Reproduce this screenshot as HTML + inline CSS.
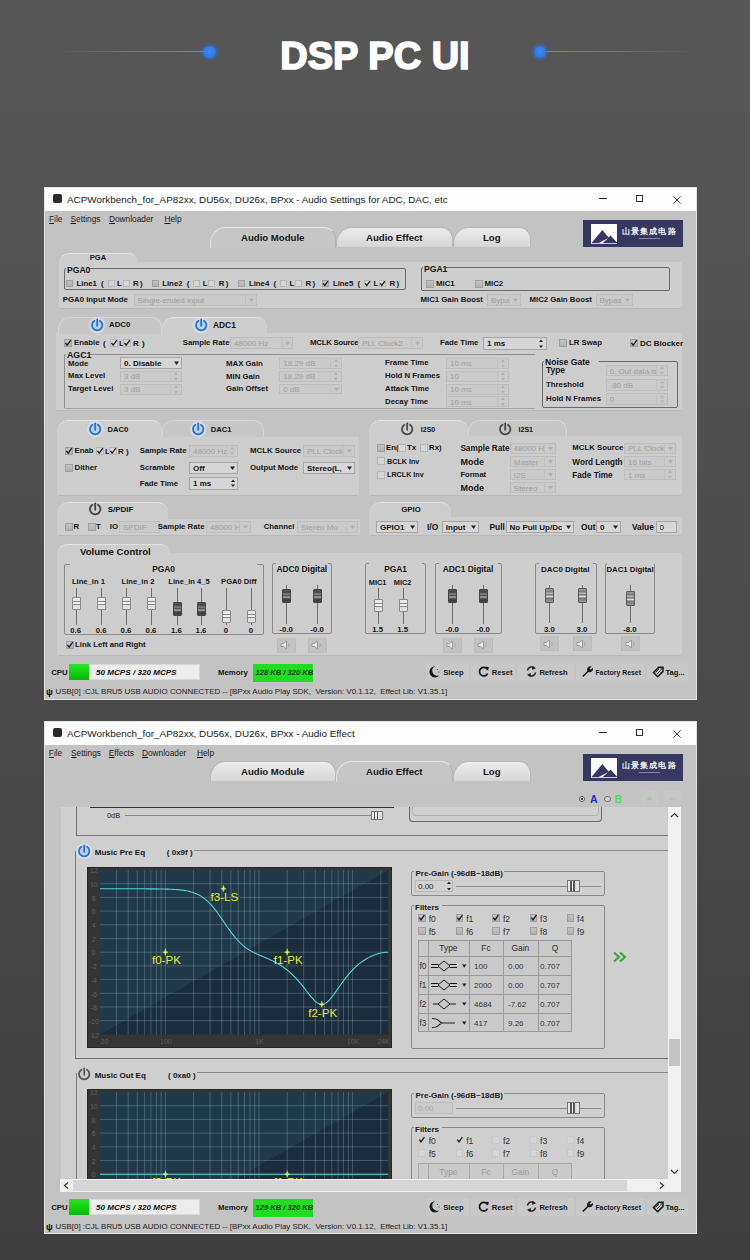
<!DOCTYPE html><html><head><meta charset="utf-8"><style>*{margin:0;padding:0;box-sizing:border-box}
html,body{width:750px;height:1260px;overflow:hidden;background:#4a4a4a}
#r{position:relative;width:750px;height:1260px;overflow:hidden;font-family:"Liberation Sans",sans-serif}
#r div{position:absolute}
.t{white-space:nowrap}
</style></head><body><div id="r"><div style="left:0;top:0;width:750px;height:1260px;background:linear-gradient(#575757 0px,#535353 300px,#4a4a4a 700px,#3f3f3f 1260px);"></div>
<div style="left:50px;top:51.2px;width:155px;height:1.2px;background:linear-gradient(90deg,rgba(130,140,165,0),rgba(130,145,175,0.55) 55%,rgba(120,150,210,0.75));"></div>
<div style="left:545px;top:51.2px;width:155px;height:1.2px;background:linear-gradient(90deg,rgba(120,150,210,0.75),rgba(130,145,175,0.5) 45%,rgba(130,140,165,0));"></div>
<div style="left:199.5px;top:41.8px;width:20.0px;height:20.0px;border-radius:50%;background:radial-gradient(circle,rgba(45,125,235,0.5) 0%,rgba(45,120,230,0.2) 55%,rgba(45,120,230,0) 72%);"></div>
<div style="left:203.2px;top:45.5px;width:12.6px;height:12.6px;border-radius:50%;background:radial-gradient(circle at 50% 45%,#3a8cf0,#2c7ae2 65%,#2f72c8);box-shadow:0 0 3px rgba(40,120,230,0.6);"></div>
<div style="left:530px;top:41.8px;width:20px;height:20.0px;border-radius:50%;background:radial-gradient(circle,rgba(45,125,235,0.5) 0%,rgba(45,120,230,0.2) 55%,rgba(45,120,230,0) 72%);"></div>
<div style="left:533.7px;top:45.5px;width:12.6px;height:12.6px;border-radius:50%;background:radial-gradient(circle at 50% 45%,#3a8cf0,#2c7ae2 65%,#2f72c8);box-shadow:0 0 3px rgba(40,120,230,0.6);"></div>
<div class="t" style="left:175px;width:400px;text-align:center;top:34px;height:44px;line-height:44px;font-size:38px;font-weight:bold;color:#fff;-webkit-text-stroke:1.6px #fff;letter-spacing:0px;">DSP PC UI</div>
<div style="left:44px;top:187px;width:653px;height:512.5px;background:#c3c3c3;border:1px solid #e2e2e2;"></div>
<div style="left:45px;top:188px;width:651px;height:23px;background:#fdfdfd;"></div>
<div style="left:52.7px;top:194px;width:9.3px;height:9px;background:#2b2b2b;border-radius:2px;"></div>
<div class="t" style="left:67px;top:193.07px;height:13.86px;line-height:13.86px;font-size:9.9px;font-weight:normal;color:#1a1a1a;white-space:nowrap;">ACPWorkbench_for_AP82xx, DU56x, DU26x, BPxx - Audio Settings for ADC, DAC, etc</div>
<div style="left:599.3px;top:198px;width:7.7px;height:1.2px;background:#222;"></div>
<div style="left:636px;top:195.2px;width:7px;height:7.3px;border:1px solid #333;"></div>
<svg style="position:absolute;left:672.5px;top:195.7px;" width="8" height="8" viewBox="0 0 8 8"><path d="M0.3 0.3 L7.7 7.7 M7.7 0.3 L0.3 7.7" stroke="#333" stroke-width="0.9"/></svg>
<div class="t" style="left:49px;top:214.49px;height:11.62px;line-height:11.62px;font-size:8.3px;font-weight:normal;color:#1a1a1a;white-space:nowrap;"><u>F</u>ile</div>
<div class="t" style="left:70.5px;top:214.49px;height:11.62px;line-height:11.62px;font-size:8.3px;font-weight:normal;color:#1a1a1a;white-space:nowrap;"><u>S</u>ettings</div>
<div class="t" style="left:109px;top:214.49px;height:11.62px;line-height:11.62px;font-size:8.3px;font-weight:normal;color:#1a1a1a;white-space:nowrap;"><u>D</u>ownloader</div>
<div class="t" style="left:164.5px;top:214.49px;height:11.62px;line-height:11.62px;font-size:8.3px;font-weight:normal;color:#1a1a1a;white-space:nowrap;"><u>H</u>elp</div>
<div style="left:209.5px;top:226.5px;width:126.5px;height:21.0px;background:#c6c6c6;border-radius:16px 12px 0 0;border:1px solid #b2b2b2;border-top-color:#e8e8e8;border-left-color:#e0e0e0;border-bottom:none;"></div>
<div class="t" style="left:-27.25px;width:600px;text-align:center;top:231.08px;height:13.44px;line-height:13.44px;font-size:9.6px;font-weight:bold;color:#151515;">Audio Module</div>
<div style="left:336px;top:226.5px;width:116.5px;height:20.0px;background:linear-gradient(#ececec,#d6d6d6);border-radius:16px 12px 0 0;border:1px solid #b8b8b8;border-bottom:none;"></div>
<div class="t" style="left:94.25px;width:600px;text-align:center;top:231.08px;height:13.44px;line-height:13.44px;font-size:9.6px;font-weight:bold;color:#151515;">Audio Effect</div>
<div style="left:452.5px;top:226.5px;width:78.5px;height:20.0px;background:linear-gradient(#ececec,#d6d6d6);border-radius:16px 12px 0 0;border:1px solid #b8b8b8;border-bottom:none;"></div>
<div class="t" style="left:191.75px;width:600px;text-align:center;top:231.08px;height:13.44px;line-height:13.44px;font-size:9.6px;font-weight:bold;color:#151515;">Log</div>
<div style="left:583.3px;top:220px;width:99.4px;height:27.2px;background:#363862;"></div>
<div style="left:590.6px;top:224.4px;width:26.1px;height:19.2px;background:#fbfbfb;"></div>
<svg style="position:absolute;left:590.6px;top:224.4px;" width="26.1" height="19.2" viewBox="0 0 26.1 19.2"><path d="M0.3 19.2 L11.4 5.9 L17.6 13.4 L19.6 11.6 L26.1 18.6 V19.2 Z" fill="#363862"/><path d="M7.5 19.2 Q12 16.5 17 14.2 Q13.5 17.5 11.5 19.2 Z" fill="#fbfbfb"/></svg>
<div class="t" style="left:349.3px;width:600px;text-align:center;top:226.94px;height:10.92px;line-height:10.92px;font-size:7.8px;font-weight:bold;color:#f4f4f8;letter-spacing:1.2px;">山景集成电路</div>
<div style="left:638.6px;top:238px;width:21.4px;height:1px;background:rgba(255,255,255,0.4);"></div>
<div style="left:44px;top:721px;width:653px;height:513px;background:#c3c3c3;border:1px solid #e2e2e2;"></div>
<div style="left:45px;top:722px;width:651px;height:23px;background:#fdfdfd;"></div>
<div style="left:52.7px;top:728px;width:9.3px;height:9px;background:#2b2b2b;border-radius:2px;"></div>
<div class="t" style="left:67px;top:727.07px;height:13.86px;line-height:13.86px;font-size:9.9px;font-weight:normal;color:#1a1a1a;white-space:nowrap;">ACPWorkbench_for_AP82xx, DU56x, DU26x, BPxx - Audio Effect</div>
<div style="left:599.3px;top:732px;width:7.7px;height:1.2px;background:#222;"></div>
<div style="left:636px;top:729.2px;width:7px;height:7.3px;border:1px solid #333;"></div>
<svg style="position:absolute;left:672.5px;top:729.7px;" width="8" height="8" viewBox="0 0 8 8"><path d="M0.3 0.3 L7.7 7.7 M7.7 0.3 L0.3 7.7" stroke="#333" stroke-width="0.9"/></svg>
<div class="t" style="left:48.8px;top:748.49px;height:11.62px;line-height:11.62px;font-size:8.3px;font-weight:normal;color:#1a1a1a;white-space:nowrap;"><u>F</u>ile</div>
<div class="t" style="left:71px;top:748.49px;height:11.62px;line-height:11.62px;font-size:8.3px;font-weight:normal;color:#1a1a1a;white-space:nowrap;"><u>S</u>ettings</div>
<div class="t" style="left:108.8px;top:748.49px;height:11.62px;line-height:11.62px;font-size:8.3px;font-weight:normal;color:#1a1a1a;white-space:nowrap;"><u>E</u>ffects</div>
<div class="t" style="left:142px;top:748.49px;height:11.62px;line-height:11.62px;font-size:8.3px;font-weight:normal;color:#1a1a1a;white-space:nowrap;"><u>D</u>ownloader</div>
<div class="t" style="left:197px;top:748.49px;height:11.62px;line-height:11.62px;font-size:8.3px;font-weight:normal;color:#1a1a1a;white-space:nowrap;"><u>H</u>elp</div>
<div style="left:209.5px;top:760.5px;width:126.5px;height:20.0px;background:linear-gradient(#ececec,#d6d6d6);border-radius:16px 12px 0 0;border:1px solid #b8b8b8;border-bottom:none;"></div>
<div class="t" style="left:-27.25px;width:600px;text-align:center;top:765.08px;height:13.44px;line-height:13.44px;font-size:9.6px;font-weight:bold;color:#151515;">Audio Module</div>
<div style="left:336px;top:760.5px;width:116.5px;height:21.0px;background:#c6c6c6;border-radius:16px 12px 0 0;border:1px solid #b2b2b2;border-top-color:#e8e8e8;border-left-color:#e0e0e0;border-bottom:none;"></div>
<div class="t" style="left:94.25px;width:600px;text-align:center;top:765.08px;height:13.44px;line-height:13.44px;font-size:9.6px;font-weight:bold;color:#151515;">Audio Effect</div>
<div style="left:452.5px;top:760.5px;width:78.5px;height:20.0px;background:linear-gradient(#ececec,#d6d6d6);border-radius:16px 12px 0 0;border:1px solid #b8b8b8;border-bottom:none;"></div>
<div class="t" style="left:191.75px;width:600px;text-align:center;top:765.08px;height:13.44px;line-height:13.44px;font-size:9.6px;font-weight:bold;color:#151515;">Log</div>
<div style="left:583.3px;top:754px;width:99.4px;height:27.2px;background:#363862;"></div>
<div style="left:590.6px;top:758.4px;width:26.1px;height:19.2px;background:#fbfbfb;"></div>
<svg style="position:absolute;left:590.6px;top:758.4px;" width="26.1" height="19.2" viewBox="0 0 26.1 19.2"><path d="M0.3 19.2 L11.4 5.9 L17.6 13.4 L19.6 11.6 L26.1 18.6 V19.2 Z" fill="#363862"/><path d="M7.5 19.2 Q12 16.5 17 14.2 Q13.5 17.5 11.5 19.2 Z" fill="#fbfbfb"/></svg>
<div class="t" style="left:349.3px;width:600px;text-align:center;top:760.94px;height:10.92px;line-height:10.92px;font-size:7.8px;font-weight:bold;color:#f4f4f8;letter-spacing:1.2px;">山景集成电路</div>
<div style="left:638.6px;top:772px;width:21.4px;height:1px;background:rgba(255,255,255,0.4);"></div>
<div style="left:59px;top:262px;width:622.5px;height:46.5px;background:#cdcdcd;border-radius:0 0 3px 3px;border-bottom:1px solid #b9b9b9;"></div>
<div style="left:59px;top:253px;width:78px;height:10px;background:#cdcdcd;border-radius:12px 10px 0 0;border-top:1px solid #e2e2e2;"></div>
<div class="t" style="left:-202px;width:600px;text-align:center;top:253.48px;height:10.64px;line-height:10.64px;font-size:7.6px;font-weight:bold;color:#151515;">PGA</div>
<div style="left:63.5px;top:268px;width:342.5px;height:22px;border:1px solid #6a6a6a;border-radius:2px;"></div>
<div style="left:66px;top:266px;width:23.33px;height:4px;background:#cdcdcd;"></div>
<div class="t" style="left:67px;top:263.78px;height:12.04px;line-height:12.04px;font-size:8.6px;font-weight:bold;color:#151515;">PGA0</div>
<div style="left:66px;top:280.0px;width:7px;height:7.0px;border:1px solid #a0a0a0;background:linear-gradient(#c2c2c2,#b2b2b2);"></div>
<div class="t" style="left:76.5px;top:278.84px;height:10.92px;line-height:10.92px;font-size:7.8px;font-weight:bold;color:#151515;">Line1</div>
<div class="t" style="left:101px;top:277.9px;height:11.2px;line-height:11.2px;font-size:8px;font-weight:bold;color:#151515;">(</div>
<div style="left:107.5px;top:280.0px;width:7.0px;height:7.0px;border:1px solid #a0a0a0;background:linear-gradient(#c2c2c2,#b2b2b2);background:#d6d6d6;border-color:#b6b6b6;"></div>
<div class="t" style="left:117px;top:278.84px;height:10.92px;line-height:10.92px;font-size:7.8px;font-weight:bold;color:#151515;">L</div>
<div style="left:122.5px;top:280.0px;width:7.0px;height:7.0px;border:1px solid #a0a0a0;background:linear-gradient(#c2c2c2,#b2b2b2);background:#d6d6d6;border-color:#b6b6b6;"></div>
<div class="t" style="left:133px;top:278.84px;height:10.92px;line-height:10.92px;font-size:7.8px;font-weight:bold;color:#151515;">R</div>
<div class="t" style="left:140px;top:277.9px;height:11.2px;line-height:11.2px;font-size:8px;font-weight:bold;color:#151515;">)</div>
<div style="left:151.7px;top:280.0px;width:7.0px;height:7.0px;border:1px solid #a0a0a0;background:linear-gradient(#c2c2c2,#b2b2b2);"></div>
<div class="t" style="left:162.2px;top:278.84px;height:10.92px;line-height:10.92px;font-size:7.8px;font-weight:bold;color:#151515;">Line2</div>
<div class="t" style="left:186.7px;top:277.9px;height:11.2px;line-height:11.2px;font-size:8px;font-weight:bold;color:#151515;">(</div>
<div style="left:193.2px;top:280.0px;width:7.0px;height:7.0px;border:1px solid #a0a0a0;background:linear-gradient(#c2c2c2,#b2b2b2);background:#d6d6d6;border-color:#b6b6b6;"></div>
<div class="t" style="left:202.7px;top:278.84px;height:10.92px;line-height:10.92px;font-size:7.8px;font-weight:bold;color:#151515;">L</div>
<div style="left:208.2px;top:280.0px;width:7.0px;height:7.0px;border:1px solid #a0a0a0;background:linear-gradient(#c2c2c2,#b2b2b2);background:#d6d6d6;border-color:#b6b6b6;"></div>
<div class="t" style="left:218.7px;top:278.84px;height:10.92px;line-height:10.92px;font-size:7.8px;font-weight:bold;color:#151515;">R</div>
<div class="t" style="left:225.7px;top:277.9px;height:11.2px;line-height:11.2px;font-size:8px;font-weight:bold;color:#151515;">)</div>
<div style="left:238.4px;top:280.0px;width:7.0px;height:7.0px;border:1px solid #a0a0a0;background:linear-gradient(#c2c2c2,#b2b2b2);"></div>
<div class="t" style="left:248.9px;top:278.84px;height:10.92px;line-height:10.92px;font-size:7.8px;font-weight:bold;color:#151515;">Line4</div>
<div class="t" style="left:273.4px;top:277.9px;height:11.2px;line-height:11.2px;font-size:8px;font-weight:bold;color:#151515;">(</div>
<div style="left:279.9px;top:280.0px;width:7.0px;height:7.0px;border:1px solid #a0a0a0;background:linear-gradient(#c2c2c2,#b2b2b2);background:#d6d6d6;border-color:#b6b6b6;"></div>
<div class="t" style="left:289.4px;top:278.84px;height:10.92px;line-height:10.92px;font-size:7.8px;font-weight:bold;color:#151515;">L</div>
<div style="left:294.9px;top:280.0px;width:7.0px;height:7.0px;border:1px solid #a0a0a0;background:linear-gradient(#c2c2c2,#b2b2b2);background:#d6d6d6;border-color:#b6b6b6;"></div>
<div class="t" style="left:305.4px;top:278.84px;height:10.92px;line-height:10.92px;font-size:7.8px;font-weight:bold;color:#151515;">R</div>
<div class="t" style="left:312.4px;top:277.9px;height:11.2px;line-height:11.2px;font-size:8px;font-weight:bold;color:#151515;">)</div>
<div style="left:322.4px;top:280.0px;width:7.0px;height:7.0px;border:1px solid #a0a0a0;background:linear-gradient(#c2c2c2,#b2b2b2);"></div>
<svg style="position:absolute;left:322.4px;top:280.0px;" width="7" height="7" viewBox="0 0 7 7"><path d="M1.26 3.36 L2.8 5.46 L5.95 1.05" fill="none" stroke="#1a1a1a" stroke-width="1.3"/></svg>
<div class="t" style="left:332.9px;top:278.84px;height:10.92px;line-height:10.92px;font-size:7.8px;font-weight:bold;color:#151515;">Line5</div>
<div class="t" style="left:357.4px;top:277.9px;height:11.2px;line-height:11.2px;font-size:8px;font-weight:bold;color:#151515;">(</div>
<div style="left:363.9px;top:280.0px;width:7.0px;height:7.0px;border:1px solid #a0a0a0;background:linear-gradient(#c2c2c2,#b2b2b2);background:#d6d6d6;border-color:#b6b6b6;"></div>
<svg style="position:absolute;left:363.9px;top:280.0px;" width="7" height="7" viewBox="0 0 7 7"><path d="M1.26 3.36 L2.8 5.46 L5.95 1.05" fill="none" stroke="#1a1a1a" stroke-width="1.3"/></svg>
<div class="t" style="left:373.4px;top:278.84px;height:10.92px;line-height:10.92px;font-size:7.8px;font-weight:bold;color:#151515;">L</div>
<div style="left:378.9px;top:280.0px;width:7.0px;height:7.0px;border:1px solid #a0a0a0;background:linear-gradient(#c2c2c2,#b2b2b2);background:#d6d6d6;border-color:#b6b6b6;"></div>
<svg style="position:absolute;left:378.9px;top:280.0px;" width="7" height="7" viewBox="0 0 7 7"><path d="M1.26 3.36 L2.8 5.46 L5.95 1.05" fill="none" stroke="#1a1a1a" stroke-width="1.3"/></svg>
<div class="t" style="left:389.4px;top:278.84px;height:10.92px;line-height:10.92px;font-size:7.8px;font-weight:bold;color:#151515;">R</div>
<div class="t" style="left:396.4px;top:277.9px;height:11.2px;line-height:11.2px;font-size:8px;font-weight:bold;color:#151515;">)</div>
<div class="t" style="left:62.8px;top:294.84px;height:10.92px;line-height:10.92px;font-size:7.8px;font-weight:bold;color:#151515;">PGA0 Input Mode</div>
<div style="left:133.6px;top:293.5px;width:123.4px;height:12.5px;border:1px solid #bdbdbd;background:#cacaca;"></div>
<div class="t" style="left:137.6px;top:294.95px;height:11.2px;line-height:11.2px;font-size:8px;font-weight:normal;color:#a0a0a0;white-space:nowrap;overflow:hidden;width:107.4px">Single-ended input</div>
<div style="left:245px;top:294.5px;width:1px;height:10.5px;background:#c0c0c0;"></div>
<svg style="position:absolute;left:246px;top:293.5px;" width="10" height="12.5" viewBox="0 0 10 12.5"><path d="M3 4.75 h5 l-2.5 3.5z" fill="#b0b0b0"/></svg>
<div style="left:421px;top:267px;width:249px;height:24px;border:1px solid #6a6a6a;border-radius:2px;"></div>
<div style="left:423px;top:265px;width:23.33px;height:4px;background:#cdcdcd;"></div>
<div class="t" style="left:424px;top:262.78px;height:12.04px;line-height:12.04px;font-size:8.6px;font-weight:bold;color:#151515;">PGA1</div>
<div style="left:426px;top:279.5px;width:8px;height:8.0px;border:1px solid #a0a0a0;background:linear-gradient(#c2c2c2,#b2b2b2);"></div>
<div class="t" style="left:436px;top:278.84px;height:10.92px;line-height:10.92px;font-size:7.8px;font-weight:bold;color:#151515;">MIC1</div>
<div style="left:474.5px;top:279.5px;width:8.0px;height:8.0px;border:1px solid #a0a0a0;background:linear-gradient(#c2c2c2,#b2b2b2);"></div>
<div class="t" style="left:484.5px;top:278.84px;height:10.92px;line-height:10.92px;font-size:7.8px;font-weight:bold;color:#151515;">MIC2</div>
<div class="t" style="left:420.5px;top:294.84px;height:10.92px;line-height:10.92px;font-size:7.8px;font-weight:bold;color:#151515;">MIC1 Gain Boost</div>
<div style="left:487px;top:293.5px;width:34px;height:12.5px;border:1px solid #bdbdbd;background:#cacaca;"></div>
<div class="t" style="left:491px;top:294.95px;height:11.2px;line-height:11.2px;font-size:8px;font-weight:normal;color:#a0a0a0;white-space:nowrap;overflow:hidden;width:18px">Bypass</div>
<div style="left:509px;top:294.5px;width:1px;height:10.5px;background:#c0c0c0;"></div>
<svg style="position:absolute;left:510px;top:293.5px;" width="10" height="12.5" viewBox="0 0 10 12.5"><path d="M3 4.75 h5 l-2.5 3.5z" fill="#b0b0b0"/></svg>
<div class="t" style="left:529.5px;top:294.84px;height:10.92px;line-height:10.92px;font-size:7.8px;font-weight:bold;color:#151515;">MIC2 Gain Boost</div>
<div style="left:595.5px;top:293.5px;width:37.5px;height:12.5px;border:1px solid #bdbdbd;background:#cacaca;"></div>
<div class="t" style="left:599.5px;top:294.95px;height:11.2px;line-height:11.2px;font-size:8px;font-weight:normal;color:#a0a0a0;white-space:nowrap;overflow:hidden;width:21.5px">Bypass</div>
<div style="left:621px;top:294.5px;width:1px;height:10.5px;background:#c0c0c0;"></div>
<svg style="position:absolute;left:622px;top:293.5px;" width="10" height="12.5" viewBox="0 0 10 12.5"><path d="M3 4.75 h5 l-2.5 3.5z" fill="#b0b0b0"/></svg>
<div style="left:56px;top:333px;width:625.5px;height:78px;background:#cdcdcd;border-radius:0 0 3px 3px;border-bottom:1px solid #b9b9b9;"></div>
<div style="left:58px;top:317px;width:104px;height:16.5px;background:#c6c6c6;border-radius:12px 10px 0 0;border:1px solid #d6d6d6;border-bottom:none;"></div>
<div style="left:162px;top:317px;width:105px;height:17.5px;background:#cdcdcd;border-radius:12px 10px 0 0;border-top:1px solid #e2e2e2;"></div>
<svg style="position:absolute;left:87.5px;top:315.8px;" width="18.4" height="18.4" viewBox="0 0 18.4 18.4"><circle cx="9.2" cy="9.2" r="8.2" fill="#d6e4f4" opacity="0.7"/><circle cx="9.2" cy="9.2" r="5.2" fill="#b9d2f2"/><path d="M11.96 4.79 A5.2 5.2 0 1 1 6.44 4.79" fill="none" stroke="#2f72c8" stroke-width="1.8" stroke-linecap="round"/><path d="M9.2 3.4 V9.8" stroke="#2f72c8" stroke-width="1.8" stroke-linecap="round"/></svg>
<div class="t" style="left:109px;top:320.34px;height:10.92px;line-height:10.92px;font-size:7.8px;font-weight:bold;color:#151515;">ADC0</div>
<svg style="position:absolute;left:191.5px;top:315.8px;" width="18.4" height="18.4" viewBox="0 0 18.4 18.4"><circle cx="9.2" cy="9.2" r="8.2" fill="#d6e4f4" opacity="0.7"/><circle cx="9.2" cy="9.2" r="5.2" fill="#b9d2f2"/><path d="M11.96 4.79 A5.2 5.2 0 1 1 6.44 4.79" fill="none" stroke="#2f72c8" stroke-width="1.8" stroke-linecap="round"/><path d="M9.2 3.4 V9.8" stroke="#2f72c8" stroke-width="1.8" stroke-linecap="round"/></svg>
<div class="t" style="left:213px;top:319.92px;height:11.76px;line-height:11.76px;font-size:8.4px;font-weight:bold;color:#151515;">ADC1</div>
<div style="left:64px;top:339.0px;width:8px;height:8.0px;border:1px solid #a0a0a0;background:linear-gradient(#c2c2c2,#b2b2b2);"></div>
<svg style="position:absolute;left:64px;top:339.0px;" width="8" height="8" viewBox="0 0 8 8"><path d="M1.44 3.84 L3.2 6.24 L6.8 1.2" fill="none" stroke="#1a1a1a" stroke-width="1.3"/></svg>
<div class="t" style="left:74px;top:338.34px;height:10.92px;line-height:10.92px;font-size:7.8px;font-weight:bold;color:#151515;">Enable</div>
<div class="t" style="left:103px;top:338.2px;height:11.2px;line-height:11.2px;font-size:8px;font-weight:bold;color:#151515;">(</div>
<div style="left:110px;top:339.0px;width:8px;height:8.0px;border:1px solid #a0a0a0;background:linear-gradient(#c2c2c2,#b2b2b2);background:#d6d6d6;border-color:#b6b6b6;"></div>
<svg style="position:absolute;left:110px;top:339.0px;" width="8" height="8" viewBox="0 0 8 8"><path d="M1.44 3.84 L3.2 6.24 L6.8 1.2" fill="none" stroke="#1a1a1a" stroke-width="1.3"/></svg>
<div class="t" style="left:119px;top:338.2px;height:11.2px;line-height:11.2px;font-size:8px;font-weight:bold;color:#151515;">L</div>
<div style="left:123px;top:339.0px;width:8px;height:8.0px;border:1px solid #a0a0a0;background:linear-gradient(#c2c2c2,#b2b2b2);background:#d6d6d6;border-color:#b6b6b6;"></div>
<svg style="position:absolute;left:123px;top:339.0px;" width="8" height="8" viewBox="0 0 8 8"><path d="M1.44 3.84 L3.2 6.24 L6.8 1.2" fill="none" stroke="#1a1a1a" stroke-width="1.3"/></svg>
<div class="t" style="left:133px;top:338.2px;height:11.2px;line-height:11.2px;font-size:8px;font-weight:bold;color:#151515;">R</div>
<div class="t" style="left:142px;top:338.2px;height:11.2px;line-height:11.2px;font-size:8px;font-weight:bold;color:#151515;">)</div>
<div class="t" style="left:182.7px;top:338.34px;height:10.92px;line-height:10.92px;font-size:7.8px;font-weight:bold;color:#151515;">Sample Rate</div>
<div style="left:230px;top:336.7px;width:63px;height:12.3px;border:1px solid #bdbdbd;background:#cacaca;"></div>
<div class="t" style="left:234px;top:338.05px;height:11.2px;line-height:11.2px;font-size:8px;font-weight:normal;color:#a0a0a0;white-space:nowrap;overflow:hidden;width:47px">48000 Hz</div>
<div style="left:281px;top:337.7px;width:1px;height:10.3px;background:#c0c0c0;"></div>
<svg style="position:absolute;left:282px;top:336.7px;" width="10" height="12.3" viewBox="0 0 10 12.3"><path d="M3 4.65 h5 l-2.5 3.5z" fill="#b0b0b0"/></svg>
<div class="t" style="left:310px;top:338.34px;height:10.92px;line-height:10.92px;font-size:7.8px;font-weight:bold;color:#151515;letter-spacing:-0.25px;">MCLK Source</div>
<div style="left:358px;top:336.7px;width:65px;height:12.3px;border:1px solid #bdbdbd;background:#cacaca;"></div>
<div class="t" style="left:362px;top:338.05px;height:11.2px;line-height:11.2px;font-size:8px;font-weight:normal;color:#a0a0a0;white-space:nowrap;overflow:hidden;width:49px">PLL Clock2</div>
<div style="left:411px;top:337.7px;width:1px;height:10.3px;background:#c0c0c0;"></div>
<svg style="position:absolute;left:412px;top:336.7px;" width="10" height="12.3" viewBox="0 0 10 12.3"><path d="M3 4.65 h5 l-2.5 3.5z" fill="#b0b0b0"/></svg>
<div class="t" style="left:440px;top:338.34px;height:10.92px;line-height:10.92px;font-size:7.8px;font-weight:bold;color:#151515;">Fade Time</div>
<div style="left:483px;top:336.5px;width:64px;height:13.3px;border:1px solid #a6a6a6;background:#d6d6d6;"></div>
<div class="t" style="left:487px;top:338.35px;height:11.2px;line-height:11.2px;font-size:8px;font-weight:bold;color:#151515;white-space:nowrap;overflow:hidden;width:48px">1 ms</div>
<svg style="position:absolute;left:535px;top:336.5px;" width="12" height="13.3" viewBox="0 0 12 13.3"><path d="M6 2.5 l-2 2.5 h4z M6 11 l-2 -2.5 h4z" fill="#222"/></svg>
<div style="left:559px;top:339.0px;width:8px;height:8.0px;border:1px solid #a0a0a0;background:linear-gradient(#c2c2c2,#b2b2b2);"></div>
<div class="t" style="left:569px;top:338.34px;height:10.92px;line-height:10.92px;font-size:7.8px;font-weight:bold;color:#151515;">LR Swap</div>
<div style="left:630px;top:339.0px;width:8px;height:8.0px;border:1px solid #a0a0a0;background:linear-gradient(#c2c2c2,#b2b2b2);"></div>
<svg style="position:absolute;left:630px;top:339.0px;" width="8" height="8" viewBox="0 0 8 8"><path d="M1.44 3.84 L3.2 6.24 L6.8 1.2" fill="none" stroke="#1a1a1a" stroke-width="1.3"/></svg>
<div class="t" style="left:640px;top:338.2px;height:11.2px;line-height:11.2px;font-size:8px;font-weight:bold;color:#151515;">DC Blocker</div>
<div style="left:64px;top:353.5px;width:472px;height:55.5px;border:1px solid #8e8e8e;border-right-color:transparent;border-bottom-color:#a6a6a6;border-radius:2px;"></div>
<div style="left:66px;top:351.5px;width:23.82px;height:4.0px;background:#cdcdcd;"></div>
<div class="t" style="left:67px;top:349.14px;height:12.32px;line-height:12.32px;font-size:8.8px;font-weight:bold;color:#151515;">AGC1</div>
<div class="t" style="left:68px;top:358.84px;height:10.92px;line-height:10.92px;font-size:7.8px;font-weight:bold;color:#151515;">Mode</div>
<div style="left:120px;top:357px;width:61.5px;height:12px;border:1px solid #a6a6a6;background:#d6d6d6;"></div>
<div class="t" style="left:124px;top:358.2px;height:11.2px;line-height:11.2px;font-size:8px;font-weight:bold;color:#151515;white-space:nowrap;overflow:hidden;width:45.5px">0. Disable</div>
<svg style="position:absolute;left:170.5px;top:357px;" width="10" height="12" viewBox="0 0 10 12"><path d="M3 4.5 h5 l-2.5 3.5z" fill="#222"/></svg>
<div class="t" style="left:68px;top:371.34px;height:10.92px;line-height:10.92px;font-size:7.8px;font-weight:bold;color:#151515;">Max Level</div>
<div style="left:120px;top:370.5px;width:61.5px;height:11.0px;border:1px solid #bdbdbd;background:#cacaca;"></div>
<div class="t" style="left:124px;top:371.2px;height:11.2px;line-height:11.2px;font-size:8px;font-weight:normal;color:#a0a0a0;white-space:nowrap;overflow:hidden;width:45.5px">3 dB</div>
<div style="left:169.5px;top:371.5px;width:1.0px;height:9.0px;background:#c0c0c0;"></div>
<svg style="position:absolute;left:170.5px;top:370.5px;" width="10" height="11.0" viewBox="0 0 10 11.0"><path d="M5 1.5 l-2 2.5 h4z M5 9.5 l-2 -2.5 h4z" fill="#b0b0b0"/></svg>
<div class="t" style="left:68px;top:384.34px;height:10.92px;line-height:10.92px;font-size:7.8px;font-weight:bold;color:#151515;">Target Level</div>
<div style="left:120px;top:383.5px;width:61.5px;height:11.0px;border:1px solid #bdbdbd;background:#cacaca;"></div>
<div class="t" style="left:124px;top:384.2px;height:11.2px;line-height:11.2px;font-size:8px;font-weight:normal;color:#a0a0a0;white-space:nowrap;overflow:hidden;width:45.5px">3 dB</div>
<div style="left:169.5px;top:384.5px;width:1.0px;height:9.0px;background:#c0c0c0;"></div>
<svg style="position:absolute;left:170.5px;top:383.5px;" width="10" height="11.0" viewBox="0 0 10 11.0"><path d="M5 1.5 l-2 2.5 h4z M5 9.5 l-2 -2.5 h4z" fill="#b0b0b0"/></svg>
<div class="t" style="left:226px;top:358.64px;height:10.92px;line-height:10.92px;font-size:7.8px;font-weight:bold;color:#151515;">MAX Gain</div>
<div style="left:279.3px;top:358px;width:62.4px;height:10.5px;border:1px solid #bdbdbd;background:#cacaca;"></div>
<div class="t" style="left:283.3px;top:358.45px;height:11.2px;line-height:11.2px;font-size:8px;font-weight:normal;color:#a0a0a0;white-space:nowrap;overflow:hidden;width:46.4px">18.29 dB</div>
<div style="left:329.7px;top:359px;width:1.0px;height:8.5px;background:#c0c0c0;"></div>
<svg style="position:absolute;left:330.7px;top:358px;" width="10" height="10.5" viewBox="0 0 10 10.5"><path d="M5 1.25 l-2 2.5 h4z M5 9.25 l-2 -2.5 h4z" fill="#b0b0b0"/></svg>
<div class="t" style="left:226px;top:372.04px;height:10.92px;line-height:10.92px;font-size:7.8px;font-weight:bold;color:#151515;">MIN Gain</div>
<div style="left:279.3px;top:371px;width:62.4px;height:10.5px;border:1px solid #bdbdbd;background:#cacaca;"></div>
<div class="t" style="left:283.3px;top:371.45px;height:11.2px;line-height:11.2px;font-size:8px;font-weight:normal;color:#a0a0a0;white-space:nowrap;overflow:hidden;width:46.4px">18.29 dB</div>
<div style="left:329.7px;top:372px;width:1.0px;height:8.5px;background:#c0c0c0;"></div>
<svg style="position:absolute;left:330.7px;top:371px;" width="10" height="10.5" viewBox="0 0 10 10.5"><path d="M5 1.25 l-2 2.5 h4z M5 9.25 l-2 -2.5 h4z" fill="#b0b0b0"/></svg>
<div class="t" style="left:226px;top:384.34px;height:10.92px;line-height:10.92px;font-size:7.8px;font-weight:bold;color:#151515;">Gain Offset</div>
<div style="left:279.3px;top:383.5px;width:62.4px;height:10.5px;border:1px solid #bdbdbd;background:#cacaca;"></div>
<div class="t" style="left:283.3px;top:383.95px;height:11.2px;line-height:11.2px;font-size:8px;font-weight:normal;color:#a0a0a0;white-space:nowrap;overflow:hidden;width:46.4px">0 dB</div>
<div style="left:329.7px;top:384.5px;width:1.0px;height:8.5px;background:#c0c0c0;"></div>
<svg style="position:absolute;left:330.7px;top:383.5px;" width="10" height="10.5" viewBox="0 0 10 10.5"><path d="M3 3.75 h5 l-2.5 3.5z" fill="#b0b0b0"/></svg>
<div class="t" style="left:385px;top:358.34px;height:10.92px;line-height:10.92px;font-size:7.8px;font-weight:bold;color:#151515;">Frame Time</div>
<div style="left:446px;top:357.5px;width:62.5px;height:11.0px;border:1px solid #bdbdbd;background:#cacaca;"></div>
<div class="t" style="left:450px;top:358.2px;height:11.2px;line-height:11.2px;font-size:8px;font-weight:normal;color:#a0a0a0;white-space:nowrap;overflow:hidden;width:46.5px">10 ms</div>
<div style="left:496.5px;top:358.5px;width:1.0px;height:9.0px;background:#c0c0c0;"></div>
<svg style="position:absolute;left:497.5px;top:357.5px;" width="10" height="11.0" viewBox="0 0 10 11.0"><path d="M5 1.5 l-2 2.5 h4z M5 9.5 l-2 -2.5 h4z" fill="#b0b0b0"/></svg>
<div class="t" style="left:385px;top:371.34px;height:10.92px;line-height:10.92px;font-size:7.8px;font-weight:bold;color:#151515;">Hold N Frames</div>
<div style="left:446px;top:370.5px;width:62.5px;height:11.0px;border:1px solid #bdbdbd;background:#cacaca;"></div>
<div class="t" style="left:450px;top:371.2px;height:11.2px;line-height:11.2px;font-size:8px;font-weight:normal;color:#a0a0a0;white-space:nowrap;overflow:hidden;width:46.5px">10</div>
<div style="left:496.5px;top:371.5px;width:1.0px;height:9.0px;background:#c0c0c0;"></div>
<svg style="position:absolute;left:497.5px;top:370.5px;" width="10" height="11.0" viewBox="0 0 10 11.0"><path d="M5 1.5 l-2 2.5 h4z M5 9.5 l-2 -2.5 h4z" fill="#b0b0b0"/></svg>
<div class="t" style="left:385px;top:384.34px;height:10.92px;line-height:10.92px;font-size:7.8px;font-weight:bold;color:#151515;">Attack Time</div>
<div style="left:446px;top:383.5px;width:62.5px;height:11.0px;border:1px solid #bdbdbd;background:#cacaca;"></div>
<div class="t" style="left:450px;top:384.2px;height:11.2px;line-height:11.2px;font-size:8px;font-weight:normal;color:#a0a0a0;white-space:nowrap;overflow:hidden;width:46.5px">10 ms</div>
<div style="left:496.5px;top:384.5px;width:1.0px;height:9.0px;background:#c0c0c0;"></div>
<svg style="position:absolute;left:497.5px;top:383.5px;" width="10" height="11.0" viewBox="0 0 10 11.0"><path d="M5 1.5 l-2 2.5 h4z M5 9.5 l-2 -2.5 h4z" fill="#b0b0b0"/></svg>
<div class="t" style="left:385px;top:397.04px;height:10.92px;line-height:10.92px;font-size:7.8px;font-weight:bold;color:#151515;">Decay Time</div>
<div style="left:446px;top:396.2px;width:62.5px;height:11.0px;border:1px solid #bdbdbd;background:#cacaca;"></div>
<div class="t" style="left:450px;top:396.9px;height:11.2px;line-height:11.2px;font-size:8px;font-weight:normal;color:#a0a0a0;white-space:nowrap;overflow:hidden;width:46.5px">10 ms</div>
<div style="left:496.5px;top:397.2px;width:1.0px;height:9.0px;background:#c0c0c0;"></div>
<svg style="position:absolute;left:497.5px;top:396.2px;" width="10" height="11.0" viewBox="0 0 10 11.0"><path d="M5 1.5 l-2 2.5 h4z M5 9.5 l-2 -2.5 h4z" fill="#b0b0b0"/></svg>
<div style="left:541.5px;top:360.6px;width:136.0px;height:47.9px;border:1px solid #6a6a6a;border-radius:2px;"></div>
<div style="left:544px;top:358.6px;width:55.32px;height:4.0px;background:#cdcdcd;"></div>
<div class="t" style="left:545px;top:356.38px;height:12.04px;line-height:12.04px;font-size:8.6px;font-weight:bold;color:#151515;">Noise Gate</div>
<div class="t" style="left:546px;top:365.42px;height:11.76px;line-height:11.76px;font-size:8.4px;font-weight:bold;color:#151515;">Type</div>
<div style="left:605.5px;top:365px;width:62.5px;height:11px;border:1px solid #bdbdbd;background:#cacaca;"></div>
<div class="t" style="left:609.5px;top:365.7px;height:11.2px;line-height:11.2px;font-size:8px;font-weight:normal;color:#a0a0a0;white-space:nowrap;overflow:hidden;width:46.5px">0. Out data is</div>
<div style="left:656px;top:366px;width:1px;height:9px;background:#c0c0c0;"></div>
<svg style="position:absolute;left:657px;top:365px;" width="10" height="11" viewBox="0 0 10 11"><path d="M5 1.5 l-2 2.5 h4z M5 9.5 l-2 -2.5 h4z" fill="#b0b0b0"/></svg>
<div class="t" style="left:546px;top:380.04px;height:10.92px;line-height:10.92px;font-size:7.8px;font-weight:bold;color:#151515;">Threshold</div>
<div style="left:605.5px;top:379px;width:62.5px;height:11.5px;border:1px solid #bdbdbd;background:#cacaca;"></div>
<div class="t" style="left:609.5px;top:379.95px;height:11.2px;line-height:11.2px;font-size:8px;font-weight:normal;color:#a0a0a0;white-space:nowrap;overflow:hidden;width:46.5px">-80 dB</div>
<div style="left:656px;top:380px;width:1px;height:9.5px;background:#c0c0c0;"></div>
<svg style="position:absolute;left:657px;top:379px;" width="10" height="11.5" viewBox="0 0 10 11.5"><path d="M5 1.75 l-2 2.5 h4z M5 9.75 l-2 -2.5 h4z" fill="#b0b0b0"/></svg>
<div class="t" style="left:546px;top:394.34px;height:10.92px;line-height:10.92px;font-size:7.8px;font-weight:bold;color:#151515;">Hold N Frames</div>
<div style="left:605.5px;top:393px;width:62.5px;height:12px;border:1px solid #bdbdbd;background:#cacaca;"></div>
<div class="t" style="left:609.5px;top:394.2px;height:11.2px;line-height:11.2px;font-size:8px;font-weight:normal;color:#a0a0a0;white-space:nowrap;overflow:hidden;width:46.5px">0</div>
<div style="left:656px;top:394px;width:1px;height:10px;background:#c0c0c0;"></div>
<svg style="position:absolute;left:657px;top:393px;" width="10" height="12" viewBox="0 0 10 12"><path d="M5 2.0 l-2 2.5 h4z M5 10.0 l-2 -2.5 h4z" fill="#b0b0b0"/></svg>
<div style="left:56.5px;top:437px;width:302.0px;height:58.5px;background:#cdcdcd;border-radius:0 0 3px 3px;border-bottom:1px solid #b9b9b9;"></div>
<div style="left:56.5px;top:420px;width:105.5px;height:18.5px;background:#cdcdcd;border-radius:12px 10px 0 0;border-top:1px solid #e2e2e2;"></div>
<div style="left:162px;top:420px;width:102px;height:17px;background:#c6c6c6;border-radius:12px 10px 0 0;border:1px solid #d6d6d6;border-bottom:none;"></div>
<svg style="position:absolute;left:85.5px;top:420.1px;" width="18.4" height="18.4" viewBox="0 0 18.4 18.4"><circle cx="9.2" cy="9.2" r="8.2" fill="#d6e4f4" opacity="0.7"/><circle cx="9.2" cy="9.2" r="5.2" fill="#b9d2f2"/><path d="M11.96 4.79 A5.2 5.2 0 1 1 6.44 4.79" fill="none" stroke="#2f72c8" stroke-width="1.8" stroke-linecap="round"/><path d="M9.2 3.4 V9.8" stroke="#2f72c8" stroke-width="1.8" stroke-linecap="round"/></svg>
<div class="t" style="left:107.5px;top:424.78px;height:10.64px;line-height:10.64px;font-size:7.6px;font-weight:bold;color:#151515;">DAC0</div>
<svg style="position:absolute;left:188.8px;top:420.1px;" width="18.4" height="18.4" viewBox="0 0 18.4 18.4"><circle cx="9.2" cy="9.2" r="8.2" fill="#d6e4f4" opacity="0.7"/><circle cx="9.2" cy="9.2" r="5.2" fill="#b9d2f2"/><path d="M11.96 4.79 A5.2 5.2 0 1 1 6.44 4.79" fill="none" stroke="#2f72c8" stroke-width="1.8" stroke-linecap="round"/><path d="M9.2 3.4 V9.8" stroke="#2f72c8" stroke-width="1.8" stroke-linecap="round"/></svg>
<div class="t" style="left:210.7px;top:424.78px;height:10.64px;line-height:10.64px;font-size:7.6px;font-weight:bold;color:#151515;">DAC1</div>
<div style="left:65px;top:447.0px;width:8px;height:8.0px;border:1px solid #a0a0a0;background:linear-gradient(#c2c2c2,#b2b2b2);"></div>
<svg style="position:absolute;left:65px;top:447.0px;" width="8" height="8" viewBox="0 0 8 8"><path d="M1.44 3.84 L3.2 6.24 L6.8 1.2" fill="none" stroke="#1a1a1a" stroke-width="1.3"/></svg>
<div class="t" style="left:74.5px;top:446.34px;height:10.92px;line-height:10.92px;font-size:7.8px;font-weight:bold;color:#151515;">Enab</div>
<div style="left:96px;top:447.0px;width:8px;height:8.0px;border:1px solid #a0a0a0;background:linear-gradient(#c2c2c2,#b2b2b2);background:#d6d6d6;border-color:#b6b6b6;"></div>
<svg style="position:absolute;left:96px;top:447.0px;" width="8" height="8" viewBox="0 0 8 8"><path d="M1.44 3.84 L3.2 6.24 L6.8 1.2" fill="none" stroke="#1a1a1a" stroke-width="1.3"/></svg>
<div class="t" style="left:105px;top:446.2px;height:11.2px;line-height:11.2px;font-size:8px;font-weight:bold;color:#151515;">L</div>
<div style="left:109px;top:447.0px;width:8px;height:8.0px;border:1px solid #a0a0a0;background:linear-gradient(#c2c2c2,#b2b2b2);background:#d6d6d6;border-color:#b6b6b6;"></div>
<svg style="position:absolute;left:109px;top:447.0px;" width="8" height="8" viewBox="0 0 8 8"><path d="M1.44 3.84 L3.2 6.24 L6.8 1.2" fill="none" stroke="#1a1a1a" stroke-width="1.3"/></svg>
<div class="t" style="left:118px;top:446.2px;height:11.2px;line-height:11.2px;font-size:8px;font-weight:bold;color:#151515;">R )</div>
<div style="left:65px;top:464.0px;width:8px;height:8.0px;border:1px solid #a0a0a0;background:linear-gradient(#c2c2c2,#b2b2b2);"></div>
<div class="t" style="left:74.5px;top:463.34px;height:10.92px;line-height:10.92px;font-size:7.8px;font-weight:bold;color:#151515;">Dither</div>
<div class="t" style="left:139.7px;top:446.34px;height:10.92px;line-height:10.92px;font-size:7.8px;font-weight:bold;color:#151515;">Sample Rate</div>
<div style="left:189px;top:445px;width:49px;height:12px;border:1px solid #bdbdbd;background:#cacaca;"></div>
<div class="t" style="left:193px;top:446.2px;height:11.2px;line-height:11.2px;font-size:8px;font-weight:normal;color:#a0a0a0;white-space:nowrap;overflow:hidden;width:33px">48000 Hz</div>
<div style="left:226px;top:446px;width:1px;height:10px;background:#c0c0c0;"></div>
<svg style="position:absolute;left:227px;top:445px;" width="10" height="12" viewBox="0 0 10 12"><path d="M5 2.0 l-2 2.5 h4z M5 10.0 l-2 -2.5 h4z" fill="#b0b0b0"/></svg>
<div class="t" style="left:139.7px;top:462.84px;height:10.92px;line-height:10.92px;font-size:7.8px;font-weight:bold;color:#151515;">Scramble</div>
<div style="left:189px;top:461.5px;width:49px;height:12.0px;border:1px solid #a6a6a6;background:#d6d6d6;"></div>
<div class="t" style="left:193px;top:462.7px;height:11.2px;line-height:11.2px;font-size:8px;font-weight:bold;color:#151515;white-space:nowrap;overflow:hidden;width:33px">Off</div>
<svg style="position:absolute;left:227px;top:461.5px;" width="10" height="12.0" viewBox="0 0 10 12.0"><path d="M3 4.5 h5 l-2.5 3.5z" fill="#222"/></svg>
<div class="t" style="left:139.7px;top:478.74px;height:10.92px;line-height:10.92px;font-size:7.8px;font-weight:bold;color:#151515;">Fade Time</div>
<div style="left:189px;top:477px;width:49px;height:12.5px;border:1px solid #a6a6a6;background:#d6d6d6;"></div>
<div class="t" style="left:193px;top:478.45px;height:11.2px;line-height:11.2px;font-size:8px;font-weight:bold;color:#151515;white-space:nowrap;overflow:hidden;width:33px">1 ms</div>
<svg style="position:absolute;left:227px;top:477px;" width="12" height="12.5" viewBox="0 0 12 12.5"><path d="M6 2.5 l-2 2.5 h4z M6 10 l-2 -2.5 h4z" fill="#222"/></svg>
<div class="t" style="left:250px;top:446.34px;height:10.92px;line-height:10.92px;font-size:7.8px;font-weight:bold;color:#151515;">MCLK Source</div>
<div style="left:303px;top:445px;width:51.5px;height:12px;border:1px solid #bdbdbd;background:#cacaca;"></div>
<div class="t" style="left:307px;top:446.2px;height:11.2px;line-height:11.2px;font-size:8px;font-weight:normal;color:#a0a0a0;white-space:nowrap;overflow:hidden;width:35.5px">PLL Clock</div>
<div style="left:342.5px;top:446px;width:1.0px;height:10px;background:#c0c0c0;"></div>
<svg style="position:absolute;left:343.5px;top:445px;" width="10" height="12" viewBox="0 0 10 12"><path d="M3 4.5 h5 l-2.5 3.5z" fill="#b0b0b0"/></svg>
<div class="t" style="left:250px;top:463.04px;height:10.92px;line-height:10.92px;font-size:7.8px;font-weight:bold;color:#151515;">Output Mode</div>
<div style="left:303px;top:461.5px;width:51.5px;height:12.0px;border:1px solid #a6a6a6;background:#d6d6d6;"></div>
<div class="t" style="left:307px;top:462.7px;height:11.2px;line-height:11.2px;font-size:8px;font-weight:bold;color:#151515;white-space:nowrap;overflow:hidden;width:35.5px">Stereo(L,</div>
<svg style="position:absolute;left:343.5px;top:461.5px;" width="10" height="12.0" viewBox="0 0 10 12.0"><path d="M3 4.5 h5 l-2.5 3.5z" fill="#222"/></svg>
<div style="left:369px;top:436px;width:312.5px;height:59.5px;background:#cdcdcd;border-radius:0 0 3px 3px;border-bottom:1px solid #b9b9b9;"></div>
<div style="left:369px;top:420.3px;width:99px;height:17.2px;background:#cdcdcd;border-radius:12px 10px 0 0;border-top:1px solid #e2e2e2;"></div>
<div style="left:468px;top:420.3px;width:99px;height:15.7px;background:#c6c6c6;border-radius:12px 10px 0 0;border:1px solid #d6d6d6;border-bottom:none;"></div>
<svg style="position:absolute;left:397.8px;top:419.8px;" width="18.4" height="18.4" viewBox="0 0 18.4 18.4"><path d="M11.96 4.79 A5.2 5.2 0 1 1 6.44 4.79" fill="none" stroke="#4a4a4a" stroke-width="1.8" stroke-linecap="round"/><path d="M9.2 3.4 V9.8" stroke="#4a4a4a" stroke-width="1.8" stroke-linecap="round"/></svg>
<div class="t" style="left:420.8px;top:424.9px;height:9.8px;line-height:9.8px;font-size:7px;font-weight:bold;color:#151515;">I2S0</div>
<svg style="position:absolute;left:495.8px;top:419.8px;" width="18.4" height="18.4" viewBox="0 0 18.4 18.4"><path d="M11.96 4.79 A5.2 5.2 0 1 1 6.44 4.79" fill="none" stroke="#4a4a4a" stroke-width="1.8" stroke-linecap="round"/><path d="M9.2 3.4 V9.8" stroke="#4a4a4a" stroke-width="1.8" stroke-linecap="round"/></svg>
<div class="t" style="left:518.6px;top:424.9px;height:9.8px;line-height:9.8px;font-size:7px;font-weight:bold;color:#151515;">I2S1</div>
<div style="left:377px;top:444.0px;width:8px;height:8.0px;border:1px solid #a0a0a0;background:linear-gradient(#c2c2c2,#b2b2b2);"></div>
<div class="t" style="left:386px;top:443.34px;height:10.92px;line-height:10.92px;font-size:7.8px;font-weight:bold;color:#151515;">En(</div>
<div style="left:398px;top:444.0px;width:8px;height:8.0px;border:1px solid #a0a0a0;background:linear-gradient(#c2c2c2,#b2b2b2);background:#d6d6d6;border-color:#b6b6b6;"></div>
<div class="t" style="left:407px;top:443.34px;height:10.92px;line-height:10.92px;font-size:7.8px;font-weight:bold;color:#151515;">Tx</div>
<div style="left:420px;top:444.0px;width:8px;height:8.0px;border:1px solid #a0a0a0;background:linear-gradient(#c2c2c2,#b2b2b2);background:#d6d6d6;border-color:#b6b6b6;"></div>
<div class="t" style="left:429px;top:443.34px;height:10.92px;line-height:10.92px;font-size:7.8px;font-weight:bold;color:#151515;">Rx)</div>
<div style="left:377px;top:457.0px;width:8px;height:8.0px;border:1px solid #a0a0a0;background:linear-gradient(#c2c2c2,#b2b2b2);background:#d6d6d6;border-color:#b6b6b6;"></div>
<div class="t" style="left:387px;top:456.76px;height:10.08px;line-height:10.08px;font-size:7.2px;font-weight:bold;color:#151515;">BCLK Inv</div>
<div style="left:377px;top:470.5px;width:8px;height:8.0px;border:1px solid #a0a0a0;background:linear-gradient(#c2c2c2,#b2b2b2);background:#d6d6d6;border-color:#b6b6b6;"></div>
<div class="t" style="left:387px;top:470.26px;height:10.08px;line-height:10.08px;font-size:7.2px;font-weight:bold;color:#151515;">LRCLK Inv</div>
<div class="t" style="left:460.4px;top:443.06px;height:11.48px;line-height:11.48px;font-size:8.2px;font-weight:bold;color:#151515;">Sample Rate</div>
<div style="left:509.8px;top:442.5px;width:46.2px;height:11.0px;border:1px solid #bdbdbd;background:#cacaca;"></div>
<div class="t" style="left:513.8px;top:443.2px;height:11.2px;line-height:11.2px;font-size:8px;font-weight:normal;color:#a0a0a0;white-space:nowrap;overflow:hidden;width:30.2px">48000 Hz</div>
<div style="left:544px;top:443.5px;width:1px;height:9.0px;background:#c0c0c0;"></div>
<svg style="position:absolute;left:545px;top:442.5px;" width="10" height="11.0" viewBox="0 0 10 11.0"><path d="M3 4.0 h5 l-2.5 3.5z" fill="#b0b0b0"/></svg>
<div class="t" style="left:460.4px;top:456.1px;height:12.6px;line-height:12.6px;font-size:9px;font-weight:bold;color:#151515;">Mode</div>
<div style="left:509.8px;top:456.1px;width:46.2px;height:11.0px;border:1px solid #bdbdbd;background:#cacaca;"></div>
<div class="t" style="left:513.8px;top:456.8px;height:11.2px;line-height:11.2px;font-size:8px;font-weight:normal;color:#a0a0a0;white-space:nowrap;overflow:hidden;width:30.2px">Master</div>
<div style="left:544px;top:457.1px;width:1px;height:9.0px;background:#c0c0c0;"></div>
<svg style="position:absolute;left:545px;top:456.1px;" width="10" height="11.0" viewBox="0 0 10 11.0"><path d="M3 4.0 h5 l-2.5 3.5z" fill="#b0b0b0"/></svg>
<div class="t" style="left:460.4px;top:470.08px;height:10.64px;line-height:10.64px;font-size:7.6px;font-weight:bold;color:#151515;">Format</div>
<div style="left:509.8px;top:469.1px;width:46.2px;height:11.0px;border:1px solid #bdbdbd;background:#cacaca;"></div>
<div class="t" style="left:513.8px;top:469.8px;height:11.2px;line-height:11.2px;font-size:8px;font-weight:normal;color:#a0a0a0;white-space:nowrap;overflow:hidden;width:30.2px">I2S</div>
<div style="left:544px;top:470.1px;width:1px;height:9.0px;background:#c0c0c0;"></div>
<svg style="position:absolute;left:545px;top:469.1px;" width="10" height="11.0" viewBox="0 0 10 11.0"><path d="M3 4.0 h5 l-2.5 3.5z" fill="#b0b0b0"/></svg>
<div class="t" style="left:460.4px;top:482.2px;height:12.6px;line-height:12.6px;font-size:9px;font-weight:bold;color:#151515;">Mode</div>
<div style="left:509.8px;top:482.2px;width:46.2px;height:11.0px;border:1px solid #bdbdbd;background:#cacaca;"></div>
<div class="t" style="left:513.8px;top:482.9px;height:11.2px;line-height:11.2px;font-size:8px;font-weight:normal;color:#a0a0a0;white-space:nowrap;overflow:hidden;width:30.2px">Stereo</div>
<div style="left:544px;top:483.2px;width:1px;height:9.0px;background:#c0c0c0;"></div>
<svg style="position:absolute;left:545px;top:482.2px;" width="10" height="11.0" viewBox="0 0 10 11.0"><path d="M3 4.0 h5 l-2.5 3.5z" fill="#b0b0b0"/></svg>
<div class="t" style="left:572.3px;top:443.34px;height:10.92px;line-height:10.92px;font-size:7.8px;font-weight:bold;color:#151515;">MCLK Source</div>
<div style="left:624px;top:442.5px;width:52px;height:11.0px;border:1px solid #bdbdbd;background:#cacaca;"></div>
<div class="t" style="left:628px;top:443.2px;height:11.2px;line-height:11.2px;font-size:8px;font-weight:normal;color:#a0a0a0;white-space:nowrap;overflow:hidden;width:36px">PLL Clock2</div>
<div style="left:664px;top:443.5px;width:1px;height:9.0px;background:#c0c0c0;"></div>
<svg style="position:absolute;left:665px;top:442.5px;" width="10" height="11.0" viewBox="0 0 10 11.0"><path d="M3 4.0 h5 l-2.5 3.5z" fill="#b0b0b0"/></svg>
<div class="t" style="left:572.3px;top:456.66px;height:11.48px;line-height:11.48px;font-size:8.2px;font-weight:bold;color:#151515;">Word Length</div>
<div style="left:624px;top:456.1px;width:52px;height:11.0px;border:1px solid #bdbdbd;background:#cacaca;"></div>
<div class="t" style="left:628px;top:456.8px;height:11.2px;line-height:11.2px;font-size:8px;font-weight:normal;color:#a0a0a0;white-space:nowrap;overflow:hidden;width:36px">16 bits</div>
<div style="left:664px;top:457.1px;width:1px;height:9.0px;background:#c0c0c0;"></div>
<svg style="position:absolute;left:665px;top:456.1px;" width="10" height="11.0" viewBox="0 0 10 11.0"><path d="M3 4.0 h5 l-2.5 3.5z" fill="#b0b0b0"/></svg>
<div class="t" style="left:572.3px;top:469.66px;height:11.48px;line-height:11.48px;font-size:8.2px;font-weight:bold;color:#151515;">Fade Time</div>
<div style="left:624px;top:469.1px;width:52px;height:11.0px;border:1px solid #bdbdbd;background:#cacaca;"></div>
<div class="t" style="left:628px;top:469.8px;height:11.2px;line-height:11.2px;font-size:8px;font-weight:normal;color:#a0a0a0;white-space:nowrap;overflow:hidden;width:36px">1 ms</div>
<div style="left:664px;top:470.1px;width:1px;height:9.0px;background:#c0c0c0;"></div>
<svg style="position:absolute;left:665px;top:469.1px;" width="10" height="11.0" viewBox="0 0 10 11.0"><path d="M5 1.5 l-2 2.5 h4z M5 9.5 l-2 -2.5 h4z" fill="#b0b0b0"/></svg>
<div style="left:56.5px;top:518.5px;width:303.5px;height:17.5px;background:#cdcdcd;border-radius:0 0 3px 3px;border-bottom:1px solid #b9b9b9;"></div>
<div style="left:56.5px;top:501.5px;width:111.0px;height:18.0px;background:#cdcdcd;border-radius:12px 10px 0 0;border-top:1px solid #e2e2e2;"></div>
<svg style="position:absolute;left:85.7px;top:499.5px;" width="18.4" height="18.4" viewBox="0 0 18.4 18.4"><path d="M11.96 4.79 A5.2 5.2 0 1 1 6.44 4.79" fill="none" stroke="#444" stroke-width="1.8" stroke-linecap="round"/><path d="M9.2 3.4 V9.8" stroke="#444" stroke-width="1.8" stroke-linecap="round"/></svg>
<div class="t" style="left:107.7px;top:503.9px;height:11.2px;line-height:11.2px;font-size:8px;font-weight:bold;color:#151515;">S/PDIF</div>
<div style="left:65px;top:522.5px;width:8px;height:8.0px;border:1px solid #a0a0a0;background:linear-gradient(#c2c2c2,#b2b2b2);"></div>
<div class="t" style="left:73.5px;top:521.84px;height:10.92px;line-height:10.92px;font-size:7.8px;font-weight:bold;color:#151515;">R</div>
<div style="left:87.6px;top:522.5px;width:8.0px;height:8.0px;border:1px solid #a0a0a0;background:linear-gradient(#c2c2c2,#b2b2b2);"></div>
<div class="t" style="left:96px;top:521.84px;height:10.92px;line-height:10.92px;font-size:7.8px;font-weight:bold;color:#151515;">T</div>
<div class="t" style="left:109.8px;top:521.84px;height:10.92px;line-height:10.92px;font-size:7.8px;font-weight:bold;color:#151515;">IO</div>
<div style="left:119px;top:520.5px;width:41px;height:12.0px;border:1px solid #bdbdbd;background:#cacaca;"></div>
<div class="t" style="left:123px;top:521.7px;height:11.2px;line-height:11.2px;font-size:8px;font-weight:normal;color:#a0a0a0;white-space:nowrap;overflow:hidden;width:25px">SPDIF IN</div>
<div class="t" style="left:157.7px;top:521.84px;height:10.92px;line-height:10.92px;font-size:7.8px;font-weight:bold;color:#151515;">Sample Rate</div>
<div style="left:206px;top:520.5px;width:45px;height:12.0px;border:1px solid #bdbdbd;background:#cacaca;"></div>
<div class="t" style="left:210px;top:521.7px;height:11.2px;line-height:11.2px;font-size:8px;font-weight:normal;color:#a0a0a0;white-space:nowrap;overflow:hidden;width:29px">48000 H</div>
<div style="left:239px;top:521.5px;width:1px;height:10.0px;background:#c0c0c0;"></div>
<svg style="position:absolute;left:240px;top:520.5px;" width="10" height="12.0" viewBox="0 0 10 12.0"><path d="M3 4.5 h5 l-2.5 3.5z" fill="#b0b0b0"/></svg>
<div class="t" style="left:263.7px;top:521.84px;height:10.92px;line-height:10.92px;font-size:7.8px;font-weight:bold;color:#151515;">Channel</div>
<div style="left:297px;top:520.5px;width:60.7px;height:12.0px;border:1px solid #bdbdbd;background:#cacaca;"></div>
<div class="t" style="left:301px;top:521.7px;height:11.2px;line-height:11.2px;font-size:8px;font-weight:normal;color:#a0a0a0;white-space:nowrap;overflow:hidden;width:44.7px">Stereo Mo</div>
<div style="left:345.7px;top:521.5px;width:1.0px;height:10.0px;background:#c0c0c0;"></div>
<svg style="position:absolute;left:346.7px;top:520.5px;" width="10" height="12.0" viewBox="0 0 10 12.0"><path d="M3 4.5 h5 l-2.5 3.5z" fill="#b0b0b0"/></svg>
<div style="left:369px;top:517px;width:313px;height:18.5px;background:#cdcdcd;border-radius:0 0 3px 3px;border-bottom:1px solid #b9b9b9;"></div>
<div style="left:369px;top:502px;width:82px;height:17.5px;background:#cdcdcd;border-radius:12px 10px 0 0;border-top:1px solid #e2e2e2;"></div>
<div class="t" style="left:111px;width:600px;text-align:center;top:505.34px;height:10.92px;line-height:10.92px;font-size:7.8px;font-weight:bold;color:#151515;">GPIO</div>
<div style="left:376px;top:521px;width:42px;height:12px;border:1px solid #a6a6a6;background:#d6d6d6;"></div>
<div class="t" style="left:380px;top:522.2px;height:11.2px;line-height:11.2px;font-size:8px;font-weight:bold;color:#151515;white-space:nowrap;overflow:hidden;width:26px">GPIO1</div>
<svg style="position:absolute;left:407px;top:521px;" width="10" height="12" viewBox="0 0 10 12"><path d="M3 4.5 h5 l-2.5 3.5z" fill="#222"/></svg>
<div class="t" style="left:427px;top:521.92px;height:11.76px;line-height:11.76px;font-size:8.4px;font-weight:bold;color:#151515;">I/O</div>
<div style="left:441.8px;top:521px;width:37.2px;height:12px;border:1px solid #a6a6a6;background:#d6d6d6;"></div>
<div class="t" style="left:445.8px;top:522.2px;height:11.2px;line-height:11.2px;font-size:8px;font-weight:bold;color:#151515;white-space:nowrap;overflow:hidden;width:21.2px">Input</div>
<svg style="position:absolute;left:468px;top:521px;" width="10" height="12" viewBox="0 0 10 12"><path d="M3 4.5 h5 l-2.5 3.5z" fill="#222"/></svg>
<div class="t" style="left:489.5px;top:521.92px;height:11.76px;line-height:11.76px;font-size:8.4px;font-weight:bold;color:#151515;">Pull</div>
<div style="left:505.5px;top:521px;width:68.1px;height:12px;border:1px solid #a6a6a6;background:#d6d6d6;"></div>
<div class="t" style="left:509.5px;top:522.2px;height:11.2px;line-height:11.2px;font-size:8px;font-weight:bold;color:#151515;white-space:nowrap;overflow:hidden;width:52.1px">No Pull Up/Dc</div>
<svg style="position:absolute;left:562.6px;top:521px;" width="10" height="12" viewBox="0 0 10 12"><path d="M3 4.5 h5 l-2.5 3.5z" fill="#222"/></svg>
<div class="t" style="left:581px;top:521.92px;height:11.76px;line-height:11.76px;font-size:8.4px;font-weight:bold;color:#151515;">Out</div>
<div style="left:596px;top:521px;width:25px;height:12px;border:1px solid #a6a6a6;background:#d6d6d6;"></div>
<div class="t" style="left:600px;top:522.2px;height:11.2px;line-height:11.2px;font-size:8px;font-weight:bold;color:#151515;white-space:nowrap;overflow:hidden;width:9px">0</div>
<svg style="position:absolute;left:610px;top:521px;" width="10" height="12" viewBox="0 0 10 12"><path d="M3 4.5 h5 l-2.5 3.5z" fill="#222"/></svg>
<div class="t" style="left:632px;top:521.92px;height:11.76px;line-height:11.76px;font-size:8.4px;font-weight:bold;color:#151515;">Value</div>
<div style="left:655.5px;top:521px;width:21.5px;height:12px;border:1px solid #a6a6a6;background:#d6d6d6;"></div>
<div class="t" style="left:659.5px;top:522.2px;height:11.2px;line-height:11.2px;font-size:8px;font-weight:normal;color:#151515;white-space:nowrap;overflow:hidden;width:5.5px">0</div>
<div style="left:56.5px;top:553px;width:625.0px;height:102.5px;background:#cdcdcd;border-radius:0 0 3px 3px;border-bottom:1px solid #b9b9b9;"></div>
<div style="left:56.5px;top:544px;width:113.5px;height:10.5px;background:#cdcdcd;border-radius:12px 10px 0 0;border-top:1px solid #e2e2e2;"></div>
<div class="t" style="left:80px;top:544.58px;height:13.44px;line-height:13.44px;font-size:9.6px;font-weight:bold;color:#151515;">Volume Control</div>
<div style="left:63.5px;top:564px;width:200.5px;height:70.5px;border:1px solid #8a8a8a;border-radius:2px;"></div>
<div style="left:70px;top:561px;width:187px;height:6px;background:#cdcdcd;"></div>
<div class="t" style="left:-136.4px;width:600px;text-align:center;top:563.72px;height:11.76px;line-height:11.76px;font-size:8.4px;font-weight:bold;color:#151515;">PGA0</div>
<div class="t" style="left:-211.6px;width:600px;text-align:center;top:577.08px;height:10.64px;line-height:10.64px;font-size:7.6px;font-weight:bold;color:#151515;">Line_in 1</div>
<div class="t" style="left:-162px;width:600px;text-align:center;top:577.08px;height:10.64px;line-height:10.64px;font-size:7.6px;font-weight:bold;color:#151515;">Line_in 2</div>
<div class="t" style="left:-111px;width:600px;text-align:center;top:577.08px;height:10.64px;line-height:10.64px;font-size:7.6px;font-weight:bold;color:#151515;">Line_in 4_5</div>
<div class="t" style="left:-61.2px;width:600px;text-align:center;top:577.08px;height:10.64px;line-height:10.64px;font-size:7.6px;font-weight:bold;color:#151515;">PGA0 Diff</div>
<div style="left:76px;top:588px;width:1px;height:37px;background:#6e6e6e;"></div>
<div style="left:71.7px;top:596.9px;width:9.6px;height:13.0px;background:linear-gradient(#e8e8e8 0,#e8e8e8 30%,#888 30%,#888 40%,#f4f4f4 40%,#f4f4f4 58%,#888 58%,#888 68%,#e0e0e0 68%);border:1px solid #8a8a8a;border-radius:1px;"></div>
<div class="t" style="left:-224.4px;width:600px;text-align:center;top:625.94px;height:10.92px;line-height:10.92px;font-size:7.8px;font-weight:bold;color:#151515;">0.6</div>
<div style="left:101px;top:588px;width:1px;height:37px;background:#6e6e6e;"></div>
<div style="left:96.7px;top:596.9px;width:9.6px;height:13.0px;background:linear-gradient(#e8e8e8 0,#e8e8e8 30%,#888 30%,#888 40%,#f4f4f4 40%,#f4f4f4 58%,#888 58%,#888 68%,#e0e0e0 68%);border:1px solid #8a8a8a;border-radius:1px;"></div>
<div class="t" style="left:-198.8px;width:600px;text-align:center;top:625.94px;height:10.92px;line-height:10.92px;font-size:7.8px;font-weight:bold;color:#151515;">0.6</div>
<div style="left:126px;top:588px;width:1px;height:37px;background:#6e6e6e;"></div>
<div style="left:121.7px;top:596.9px;width:9.6px;height:13.0px;background:linear-gradient(#e8e8e8 0,#e8e8e8 30%,#888 30%,#888 40%,#f4f4f4 40%,#f4f4f4 58%,#888 58%,#888 68%,#e0e0e0 68%);border:1px solid #8a8a8a;border-radius:1px;"></div>
<div class="t" style="left:-174px;width:600px;text-align:center;top:625.94px;height:10.92px;line-height:10.92px;font-size:7.8px;font-weight:bold;color:#151515;">0.6</div>
<div style="left:151px;top:588px;width:1px;height:37px;background:#6e6e6e;"></div>
<div style="left:146.7px;top:596.9px;width:9.6px;height:13.0px;background:linear-gradient(#e8e8e8 0,#e8e8e8 30%,#888 30%,#888 40%,#f4f4f4 40%,#f4f4f4 58%,#888 58%,#888 68%,#e0e0e0 68%);border:1px solid #8a8a8a;border-radius:1px;"></div>
<div class="t" style="left:-149px;width:600px;text-align:center;top:625.94px;height:10.92px;line-height:10.92px;font-size:7.8px;font-weight:bold;color:#151515;">0.6</div>
<div style="left:177px;top:588px;width:1px;height:37px;background:#6e6e6e;"></div>
<div style="left:172.7px;top:601.8px;width:9.6px;height:14.0px;background:linear-gradient(#5a5a5a 0,#3e3e3e 18%,#8a8a8a 34%,#4a4a4a 48%,#b0b0b0 58%,#505050 72%,#3a3a3a 88%,#555 100%);border:1px solid #444;border-radius:1px;"></div>
<div class="t" style="left:-123.6px;width:600px;text-align:center;top:625.94px;height:10.92px;line-height:10.92px;font-size:7.8px;font-weight:bold;color:#151515;">1.6</div>
<div style="left:201px;top:588px;width:1px;height:37px;background:#6e6e6e;"></div>
<div style="left:196.7px;top:601.8px;width:9.6px;height:14.0px;background:linear-gradient(#5a5a5a 0,#3e3e3e 18%,#8a8a8a 34%,#4a4a4a 48%,#b0b0b0 58%,#505050 72%,#3a3a3a 88%,#555 100%);border:1px solid #444;border-radius:1px;"></div>
<div class="t" style="left:-99px;width:600px;text-align:center;top:625.94px;height:10.92px;line-height:10.92px;font-size:7.8px;font-weight:bold;color:#151515;">1.6</div>
<div style="left:226px;top:588px;width:1px;height:37px;background:#6e6e6e;"></div>
<div style="left:221.7px;top:609.5px;width:9.6px;height:13.0px;background:linear-gradient(#e8e8e8 0,#e8e8e8 30%,#888 30%,#888 40%,#f4f4f4 40%,#f4f4f4 58%,#888 58%,#888 68%,#e0e0e0 68%);border:1px solid #8a8a8a;border-radius:1px;"></div>
<div class="t" style="left:-74px;width:600px;text-align:center;top:625.94px;height:10.92px;line-height:10.92px;font-size:7.8px;font-weight:bold;color:#151515;">0</div>
<div style="left:251px;top:588px;width:1px;height:37px;background:#6e6e6e;"></div>
<div style="left:246.7px;top:609.5px;width:9.6px;height:13.0px;background:linear-gradient(#e8e8e8 0,#e8e8e8 30%,#888 30%,#888 40%,#f4f4f4 40%,#f4f4f4 58%,#888 58%,#888 68%,#e0e0e0 68%);border:1px solid #8a8a8a;border-radius:1px;"></div>
<div class="t" style="left:-49px;width:600px;text-align:center;top:625.94px;height:10.92px;line-height:10.92px;font-size:7.8px;font-weight:bold;color:#151515;">0</div>
<div style="left:66px;top:641.0px;width:8px;height:8.0px;border:1px solid #a0a0a0;background:linear-gradient(#c2c2c2,#b2b2b2);"></div>
<svg style="position:absolute;left:66px;top:641.0px;" width="8" height="8" viewBox="0 0 8 8"><path d="M1.44 3.84 L3.2 6.24 L6.8 1.2" fill="none" stroke="#1a1a1a" stroke-width="1.3"/></svg>
<div class="t" style="left:75px;top:640.34px;height:10.92px;line-height:10.92px;font-size:7.8px;font-weight:bold;color:#151515;">Link Left and Right</div>
<div style="left:272px;top:563.4px;width:59.6px;height:70.4px;border:1px solid #8a8a8a;border-radius:2px;"></div>
<div style="left:276px;top:560px;width:51.6px;height:7px;background:#cdcdcd;"></div>
<div class="t" style="left:1.8px;width:600px;text-align:center;top:564.12px;height:11.76px;line-height:11.76px;font-size:8.4px;font-weight:bold;color:#151515;">ADC0 Digital</div>
<div style="left:286px;top:585px;width:1px;height:38.6px;background:#6e6e6e;"></div>
<div style="left:281.7px;top:589.4px;width:9.6px;height:14.0px;background:linear-gradient(#5a5a5a 0,#3e3e3e 18%,#8a8a8a 34%,#4a4a4a 48%,#b0b0b0 58%,#505050 72%,#3a3a3a 88%,#555 100%);border:1px solid #444;border-radius:1px;"></div>
<div class="t" style="left:-13.8px;width:600px;text-align:center;top:625.34px;height:10.92px;line-height:10.92px;font-size:7.8px;font-weight:bold;color:#151515;">-0.0</div>
<div style="left:276.7px;top:637.9px;width:19.0px;height:15.0px;background:#c2c2c2;border:1px solid #bcbcbc;"></div>
<svg style="position:absolute;left:280.2px;top:640.4px;" width="12" height="10" viewBox="0 0 12 10"><path d="M1 3.5 h2.5 l3 -2.5 v8 l-3 -2.5 h-2.5z" fill="#e8e8e8" stroke="#8a8a8a" stroke-width="0.8"/><path d="M8.5 3 q1.5 2 0 4" fill="none" stroke="#999" stroke-width="0.8"/></svg>
<div style="left:317px;top:585px;width:1px;height:38.6px;background:#6e6e6e;"></div>
<div style="left:312.7px;top:589.4px;width:9.6px;height:14.0px;background:linear-gradient(#5a5a5a 0,#3e3e3e 18%,#8a8a8a 34%,#4a4a4a 48%,#b0b0b0 58%,#505050 72%,#3a3a3a 88%,#555 100%);border:1px solid #444;border-radius:1px;"></div>
<div class="t" style="left:17.2px;width:600px;text-align:center;top:625.34px;height:10.92px;line-height:10.92px;font-size:7.8px;font-weight:bold;color:#151515;">-0.0</div>
<div style="left:307.7px;top:637.9px;width:19.0px;height:15.0px;background:#c2c2c2;border:1px solid #bcbcbc;"></div>
<svg style="position:absolute;left:311.2px;top:640.4px;" width="12" height="10" viewBox="0 0 12 10"><path d="M1 3.5 h2.5 l3 -2.5 v8 l-3 -2.5 h-2.5z" fill="#e8e8e8" stroke="#8a8a8a" stroke-width="0.8"/><path d="M8.5 3 q1.5 2 0 4" fill="none" stroke="#999" stroke-width="0.8"/></svg>
<div style="left:364.8px;top:563.4px;width:60.8px;height:70.4px;border:1px solid #8a8a8a;border-radius:2px;"></div>
<div style="left:369px;top:560px;width:52.6px;height:7px;background:#cdcdcd;"></div>
<div class="t" style="left:95.6px;width:600px;text-align:center;top:564.12px;height:11.76px;line-height:11.76px;font-size:8.4px;font-weight:bold;color:#151515;">PGA1</div>
<div class="t" style="left:77.6px;width:600px;text-align:center;top:577.62px;height:10.36px;line-height:10.36px;font-size:7.4px;font-weight:bold;color:#151515;">MIC1</div>
<div style="left:378px;top:588px;width:1px;height:36px;background:#6e6e6e;"></div>
<div style="left:373.7px;top:598.5px;width:9.6px;height:13.0px;background:linear-gradient(#e8e8e8 0,#e8e8e8 30%,#888 30%,#888 40%,#f4f4f4 40%,#f4f4f4 58%,#888 58%,#888 68%,#e0e0e0 68%);border:1px solid #8a8a8a;border-radius:1px;"></div>
<div class="t" style="left:77.6px;width:600px;text-align:center;top:625.34px;height:10.92px;line-height:10.92px;font-size:7.8px;font-weight:bold;color:#151515;">1.5</div>
<div class="t" style="left:102.6px;width:600px;text-align:center;top:577.62px;height:10.36px;line-height:10.36px;font-size:7.4px;font-weight:bold;color:#151515;">MIC2</div>
<div style="left:403px;top:588px;width:1px;height:36px;background:#6e6e6e;"></div>
<div style="left:398.7px;top:598.5px;width:9.6px;height:13.0px;background:linear-gradient(#e8e8e8 0,#e8e8e8 30%,#888 30%,#888 40%,#f4f4f4 40%,#f4f4f4 58%,#888 58%,#888 68%,#e0e0e0 68%);border:1px solid #8a8a8a;border-radius:1px;"></div>
<div class="t" style="left:102.6px;width:600px;text-align:center;top:625.34px;height:10.92px;line-height:10.92px;font-size:7.8px;font-weight:bold;color:#151515;">1.5</div>
<div style="left:434.6px;top:563.4px;width:67.2px;height:70.4px;border:1px solid #8a8a8a;border-radius:2px;"></div>
<div style="left:438.6px;top:560px;width:59.2px;height:7px;background:#cdcdcd;"></div>
<div class="t" style="left:168px;width:600px;text-align:center;top:564.12px;height:11.76px;line-height:11.76px;font-size:8.4px;font-weight:bold;color:#151515;">ADC1 Digital</div>
<div style="left:452px;top:585px;width:1px;height:38.6px;background:#6e6e6e;"></div>
<div style="left:447.7px;top:589.4px;width:9.6px;height:14.0px;background:linear-gradient(#5a5a5a 0,#3e3e3e 18%,#8a8a8a 34%,#4a4a4a 48%,#b0b0b0 58%,#505050 72%,#3a3a3a 88%,#555 100%);border:1px solid #444;border-radius:1px;"></div>
<div class="t" style="left:152.2px;width:600px;text-align:center;top:625.34px;height:10.92px;line-height:10.92px;font-size:7.8px;font-weight:bold;color:#151515;">-0.0</div>
<div style="left:442.7px;top:637.9px;width:19.0px;height:15.0px;background:#c2c2c2;border:1px solid #bcbcbc;"></div>
<svg style="position:absolute;left:446.2px;top:640.4px;" width="12" height="10" viewBox="0 0 12 10"><path d="M1 3.5 h2.5 l3 -2.5 v8 l-3 -2.5 h-2.5z" fill="#e8e8e8" stroke="#8a8a8a" stroke-width="0.8"/><path d="M8.5 3 q1.5 2 0 4" fill="none" stroke="#999" stroke-width="0.8"/></svg>
<div style="left:483px;top:585px;width:1px;height:38.6px;background:#6e6e6e;"></div>
<div style="left:478.7px;top:589.4px;width:9.6px;height:14.0px;background:linear-gradient(#5a5a5a 0,#3e3e3e 18%,#8a8a8a 34%,#4a4a4a 48%,#b0b0b0 58%,#505050 72%,#3a3a3a 88%,#555 100%);border:1px solid #444;border-radius:1px;"></div>
<div class="t" style="left:183.2px;width:600px;text-align:center;top:625.34px;height:10.92px;line-height:10.92px;font-size:7.8px;font-weight:bold;color:#151515;">-0.0</div>
<div style="left:473.7px;top:637.9px;width:19.0px;height:15.0px;background:#c2c2c2;border:1px solid #bcbcbc;"></div>
<svg style="position:absolute;left:477.2px;top:640.4px;" width="12" height="10" viewBox="0 0 12 10"><path d="M1 3.5 h2.5 l3 -2.5 v8 l-3 -2.5 h-2.5z" fill="#e8e8e8" stroke="#8a8a8a" stroke-width="0.8"/><path d="M8.5 3 q1.5 2 0 4" fill="none" stroke="#999" stroke-width="0.8"/></svg>
<div style="left:534.7px;top:562.8px;width:62.6px;height:71.2px;border:1px solid #8a8a8a;border-radius:2px;"></div>
<div style="left:538.7px;top:560px;width:54.6px;height:7px;background:#cdcdcd;"></div>
<div class="t" style="left:265.3px;width:600px;text-align:center;top:564.4px;height:11.2px;line-height:11.2px;font-size:8px;font-weight:bold;color:#151515;">DAC0 Digital</div>
<div style="left:549px;top:584.7px;width:1px;height:38.6px;background:#6e6e6e;"></div>
<div style="left:544.7px;top:587.8px;width:9.6px;height:15.0px;background:linear-gradient(#a0a0a0 0,#7a7a7a 20%,#b8b8b8 34%,#6a6a6a 46%,#e8e8e8 56%,#777 70%,#8a8a8a 88%,#999 100%);border:1px solid #5a5a5a;border-radius:1px;"></div>
<div class="t" style="left:249.3px;width:600px;text-align:center;top:625.34px;height:10.92px;line-height:10.92px;font-size:7.8px;font-weight:bold;color:#151515;">3.0</div>
<div style="left:539.8px;top:636.4px;width:19.0px;height:15.0px;background:#c2c2c2;border:1px solid #bcbcbc;"></div>
<svg style="position:absolute;left:543.3px;top:638.9px;" width="12" height="10" viewBox="0 0 12 10"><path d="M1 3.5 h2.5 l3 -2.5 v8 l-3 -2.5 h-2.5z" fill="#e8e8e8" stroke="#8a8a8a" stroke-width="0.8"/><path d="M8.5 3 q1.5 2 0 4" fill="none" stroke="#999" stroke-width="0.8"/></svg>
<div style="left:582px;top:584.7px;width:1px;height:38.6px;background:#6e6e6e;"></div>
<div style="left:577.7px;top:587.8px;width:9.6px;height:15.0px;background:linear-gradient(#a0a0a0 0,#7a7a7a 20%,#b8b8b8 34%,#6a6a6a 46%,#e8e8e8 56%,#777 70%,#8a8a8a 88%,#999 100%);border:1px solid #5a5a5a;border-radius:1px;"></div>
<div class="t" style="left:282px;width:600px;text-align:center;top:625.34px;height:10.92px;line-height:10.92px;font-size:7.8px;font-weight:bold;color:#151515;">3.0</div>
<div style="left:572.5px;top:636.4px;width:19.0px;height:15.0px;background:#c2c2c2;border:1px solid #bcbcbc;"></div>
<svg style="position:absolute;left:576px;top:638.9px;" width="12" height="10" viewBox="0 0 12 10"><path d="M1 3.5 h2.5 l3 -2.5 v8 l-3 -2.5 h-2.5z" fill="#e8e8e8" stroke="#8a8a8a" stroke-width="0.8"/><path d="M8.5 3 q1.5 2 0 4" fill="none" stroke="#999" stroke-width="0.8"/></svg>
<div style="left:605.3px;top:562.8px;width:49.4px;height:71.2px;border:1px solid #8a8a8a;border-radius:2px;"></div>
<div style="left:606.5px;top:560px;width:47.0px;height:7px;background:#cdcdcd;"></div>
<div class="t" style="left:330px;width:600px;text-align:center;top:564.54px;height:10.92px;line-height:10.92px;font-size:7.8px;font-weight:bold;color:#151515;">DAC1 Digital</div>
<div style="left:630px;top:584.7px;width:1px;height:38.6px;background:#6e6e6e;"></div>
<div style="left:625.7px;top:590.5px;width:9.6px;height:15.0px;background:linear-gradient(#a0a0a0 0,#7a7a7a 20%,#b8b8b8 34%,#6a6a6a 46%,#e8e8e8 56%,#777 70%,#8a8a8a 88%,#999 100%);border:1px solid #5a5a5a;border-radius:1px;"></div>
<div class="t" style="left:329.9px;width:600px;text-align:center;top:625.34px;height:10.92px;line-height:10.92px;font-size:7.8px;font-weight:bold;color:#151515;">-8.0</div>
<div style="left:621.2px;top:636.4px;width:19.0px;height:15.0px;background:#c2c2c2;border:1px solid #bcbcbc;"></div>
<svg style="position:absolute;left:624.7px;top:638.9px;" width="12" height="10" viewBox="0 0 12 10"><path d="M1 3.5 h2.5 l3 -2.5 v8 l-3 -2.5 h-2.5z" fill="#e8e8e8" stroke="#8a8a8a" stroke-width="0.8"/><path d="M8.5 3 q1.5 2 0 4" fill="none" stroke="#999" stroke-width="0.8"/></svg>
<div class="t" style="left:51.2px;top:667.64px;height:10.92px;line-height:10.92px;font-size:7.8px;font-weight:bold;color:#151515;">CPU</div>
<div style="left:68.8px;top:664px;width:131.2px;height:16px;background:#ececec;border:1px solid #d8d8d8;"></div>
<div style="left:68.8px;top:664px;width:20.0px;height:16px;background:linear-gradient(#2fe02f,#10d010 55%,#0cb50c);"></div>
<div class="t" style="left:96px;top:667.43px;height:11.34px;line-height:11.34px;font-size:8.1px;font-weight:bold;color:#151515;font-style:italic;color:#111;">50 MCPS / 320 MCPS</div>
<div class="t" style="left:218px;top:667.64px;height:10.92px;line-height:10.92px;font-size:7.8px;font-weight:bold;color:#151515;">Memory</div>
<div style="left:252.8px;top:664px;width:60.0px;height:18px;background:#22dc22;"></div>
<div class="t" style="left:255.5px;top:668.48px;height:10.64px;line-height:10.64px;font-size:7.6px;font-weight:bold;color:#151515;font-style:italic;color:#0b3a0b;">128 KB / 320 KB</div>
<div style="left:425px;top:661.5px;width:44.5px;height:20.3px;background:#c8c8c8;border:1px solid #c2c2c2;"></div>
<svg style="position:absolute;left:428px;top:665.15px;" width="13" height="13" viewBox="0 0 13 13"><path d="M7 1.2 A5.6 5.6 0 1 0 11.5 10.2 A4.6 4.6 0 0 1 7 1.2 Z" fill="#151515"/><circle cx="9.5" cy="4.5" r="0.6" fill="#333"/><circle cx="11" cy="7" r="0.6" fill="#333"/></svg>
<div class="t" style="left:443.3px;top:667.93px;height:10.64px;line-height:10.64px;font-size:7.6px;font-weight:bold;color:#1a1a1a;">Sleep</div>
<div style="left:469.5px;top:661.5px;width:46.5px;height:20.3px;background:#c8c8c8;border:1px solid #c2c2c2;"></div>
<svg style="position:absolute;left:476.5px;top:665.15px;" width="13" height="13" viewBox="0 0 13 13"><path d="M10.3 4.2 A4.3 4.3 0 1 0 10.6 8.6" fill="none" stroke="#151515" stroke-width="1.7"/><path d="M8 1.8 L11.8 2 L11 5.8 Z" fill="#151515"/></svg>
<div class="t" style="left:491.8px;top:667.93px;height:10.64px;line-height:10.64px;font-size:7.6px;font-weight:bold;color:#1a1a1a;">Reset</div>
<div style="left:516px;top:661.5px;width:58.5px;height:20.3px;background:#c8c8c8;border:1px solid #c2c2c2;"></div>
<svg style="position:absolute;left:525px;top:665.15px;" width="13" height="13" viewBox="0 0 13 13"><path d="M2.5 5.5 A4 4 0 0 1 9 3 M10.5 7.5 A4 4 0 0 1 4 10" fill="none" stroke="#222" stroke-width="1.6"/><path d="M7.5 0.8 L11 3.2 L7.2 5 Z M5.5 12.2 L2 9.8 L5.8 8 Z" fill="#222"/></svg>
<div class="t" style="left:539.4px;top:667.93px;height:10.64px;line-height:10.64px;font-size:7.6px;font-weight:bold;color:#1a1a1a;">Refresh</div>
<div style="left:574.5px;top:661.5px;width:71.0px;height:20.3px;background:#c8c8c8;border:1px solid #c2c2c2;"></div>
<svg style="position:absolute;left:580.5px;top:665.15px;" width="13" height="13" viewBox="0 0 13 13"><path d="M1.2 11 L6.3 5.9 A3.4 3.4 0 0 1 10.6 1.5 L8.6 3.5 L9.8 4.7 L11.8 2.7 A3.4 3.4 0 0 1 7.4 7 L2.3 12.1 Z" fill="#151515"/></svg>
<div class="t" style="left:595.4px;top:668.42px;height:9.66px;line-height:9.66px;font-size:6.9px;font-weight:bold;color:#1a1a1a;">Factory Reset</div>
<div style="left:645.5px;top:661.5px;width:43.5px;height:20.3px;background:#c8c8c8;border:1px solid #c2c2c2;"></div>
<svg style="position:absolute;left:651.5px;top:665.15px;" width="13" height="13" viewBox="0 0 13 13"><path d="M1.5 7.5 L6.8 2.2 H11 V6.4 L5.7 11.7 Z" fill="none" stroke="#151515" stroke-width="1.5"/><path d="M3.5 7.5 L7 4 M5 9 L8.5 5.5" stroke="#151515" stroke-width="0.9"/><circle cx="9.2" cy="4" r="0.8" fill="#151515"/></svg>
<div class="t" style="left:665.4px;top:667.93px;height:10.64px;line-height:10.64px;font-size:7.6px;font-weight:bold;color:#1a1a1a;">Tag...</div>
<div class="t" style="left:46px;top:685.5px;height:12.6px;line-height:12.6px;font-size:9px;font-weight:bold;color:#111;">&#968;</div>
<div class="t" style="left:55.5px;top:686.23px;height:11.13px;line-height:11.13px;font-size:7.95px;font-weight:normal;color:#222;">USB[0] :CJL BRU5 USB AUDIO CONNECTED -- [BPxx Audio Play SDK,&nbsp; Version: V0.1.12,&nbsp; Effect Lib: V1.35.1]</div>
<div style="left:578.5px;top:795.8px;width:6.4px;height:6.4px;border-radius:50%;border:1px solid #555;background:#eee;"></div>
<div style="left:580.5px;top:797.8px;width:2.4px;height:2.4px;border-radius:50%;background:#111;"></div>
<div class="t" style="left:590px;top:792.45px;height:14.7px;line-height:14.7px;font-size:10.5px;font-weight:bold;color:#1c2fc8;">A</div>
<div style="left:604.2px;top:795.8px;width:6.4px;height:6.4px;border-radius:50%;border:1px solid #777;background:#d0d0d0;"></div>
<div class="t" style="left:614.5px;top:792.45px;height:14.7px;line-height:14.7px;font-size:10.5px;font-weight:bold;color:#4ee04e;">B</div>
<div style="left:640.7px;top:791.4px;width:17.1px;height:14.1px;background:#c6c6c6;"></div>
<div style="left:664px;top:791.4px;width:17px;height:14.1px;background:#c6c6c6;"></div>
<svg style="position:absolute;left:645px;top:794px;" width="9" height="9" viewBox="0 0 9 9"><path d="M4.5 2.5 l-3 3.5 h6z" fill="#8fd48f"/></svg>
<svg style="position:absolute;left:668px;top:794px;" width="9" height="9" viewBox="0 0 9 9"><path d="M1.5 4.2 h6 v1.4 h-6z" fill="#8fd48f"/></svg>
<div style="left:0;top:0;width:750px;height:1179px;overflow:hidden">
<div style="left:60.5px;top:807px;width:607.5px;height:372px;background:#cfcfcf;"></div>
<div style="left:75.5px;top:807px;width:592.5px;height:28.5px;border-left:1px solid #6e6e6e;border-bottom:1px solid #7a7a7a;"></div>
<div style="left:90px;top:807.3px;width:304px;height:1.2px;background:#333;"></div>
<div class="t" style="left:107px;top:811.42px;height:10.36px;line-height:10.36px;font-size:7.4px;font-weight:normal;color:#222;">0dB</div>
<div style="left:124.7px;top:814.8px;width:246.3px;height:1.2px;background:#8a8a8a;"></div>
<div style="left:371.3px;top:811px;width:12.0px;height:9.3px;background:linear-gradient(90deg,#e8e8e8 0,#e8e8e8 20%,#555 20%,#555 32%,#f0f0f0 32%,#f0f0f0 50%,#555 50%,#555 62%,#e0e0e0 62%);border:1px solid #777;"></div>
<div style="left:408.7px;top:807px;width:193.3px;height:14.7px;border:1px solid #6a6a6a;border-top:none;border-radius:0 0 4px 4px;"></div>
<div style="left:412px;top:807px;width:187px;height:9px;border:1px solid #b0b0b0;border-top:none;border-radius:0 0 4px 4px;"></div>
<div style="left:194px;top:850px;width:474px;height:1.2px;background:#8a8a8a;"></div>
<div style="left:75.2px;top:850.5px;width:592.8px;height:208.1px;border-left:1px solid #7a7a7a;border-bottom:1px solid #6e6e6e;"></div>
<div style="left:70px;top:843px;width:124px;height:6px;background:#cfcfcf;"></div>
<svg style="position:absolute;left:74.8px;top:841.8px;" width="18.4" height="18.4" viewBox="0 0 18.4 18.4"><circle cx="9.2" cy="9.2" r="8.2" fill="#d6e4f4" opacity="0.7"/><circle cx="9.2" cy="9.2" r="5.2" fill="#b9d2f2"/><path d="M11.96 4.79 A5.2 5.2 0 1 1 6.44 4.79" fill="none" stroke="#2f72c8" stroke-width="1.8" stroke-linecap="round"/><path d="M9.2 3.4 V9.8" stroke="#2f72c8" stroke-width="1.8" stroke-linecap="round"/></svg>
<div class="t" style="left:94.8px;top:846.7px;height:11.2px;line-height:11.2px;font-size:8px;font-weight:bold;color:#151515;">Music Pre Eq</div>
<div class="t" style="left:166.8px;top:846.7px;height:11.2px;line-height:11.2px;font-size:8px;font-weight:bold;color:#151515;">( 0x9f )</div>
<div style="left:87.3px;top:867.3px;width:304.7px;height:181.2px;background:#353535;border:1px solid #262626;"></div>
<svg style="position:absolute;left:100.4px;top:870.3px;" width="288.2" height="164.4" viewBox="0 0 288.2 164.4"><defs><linearGradient id="g867" x1="0" y1="1" x2="1" y2="0"><stop offset="0" stop-color="#24404f"/><stop offset="0.5" stop-color="#22404f"/><stop offset="0.5" stop-color="#1b3343"/><stop offset="1" stop-color="#1d3444"/></linearGradient></defs><rect x="0" y="0" width="288.2" height="164.4" fill="url(#g867)"/><polygon points="0,164.4 288.2,0 288.2,164.4" fill="#1b2d3c"/><polygon points="0,0 288.2,0 0,164.4" fill="#213a49"/><line x1="16.48" y1="0" x2="16.48" y2="164.4" stroke="#94b4c0" stroke-width="0.8" opacity="0.4"/><line x1="28.18" y1="0" x2="28.18" y2="164.4" stroke="#94b4c0" stroke-width="0.8" opacity="0.4"/><line x1="37.25" y1="0" x2="37.25" y2="164.4" stroke="#94b4c0" stroke-width="0.8" opacity="0.4"/><line x1="44.66" y1="0" x2="44.66" y2="164.4" stroke="#94b4c0" stroke-width="0.8" opacity="0.4"/><line x1="50.92" y1="0" x2="50.92" y2="164.4" stroke="#94b4c0" stroke-width="0.8" opacity="0.4"/><line x1="56.35" y1="0" x2="56.35" y2="164.4" stroke="#94b4c0" stroke-width="0.8" opacity="0.4"/><line x1="61.14" y1="0" x2="61.14" y2="164.4" stroke="#94b4c0" stroke-width="0.8" opacity="0.4"/><line x1="65.42" y1="0" x2="65.42" y2="164.4" stroke="#94b4c0" stroke-width="0.8" opacity="0.4"/><line x1="93.6" y1="0" x2="93.6" y2="164.4" stroke="#94b4c0" stroke-width="0.8" opacity="0.4"/><line x1="110.08" y1="0" x2="110.08" y2="164.4" stroke="#94b4c0" stroke-width="0.8" opacity="0.4"/><line x1="121.78" y1="0" x2="121.78" y2="164.4" stroke="#94b4c0" stroke-width="0.8" opacity="0.4"/><line x1="130.85" y1="0" x2="130.85" y2="164.4" stroke="#94b4c0" stroke-width="0.8" opacity="0.4"/><line x1="138.26" y1="0" x2="138.26" y2="164.4" stroke="#94b4c0" stroke-width="0.8" opacity="0.4"/><line x1="144.52" y1="0" x2="144.52" y2="164.4" stroke="#94b4c0" stroke-width="0.8" opacity="0.4"/><line x1="149.95" y1="0" x2="149.95" y2="164.4" stroke="#94b4c0" stroke-width="0.8" opacity="0.4"/><line x1="154.74" y1="0" x2="154.74" y2="164.4" stroke="#94b4c0" stroke-width="0.8" opacity="0.4"/><line x1="159.02" y1="0" x2="159.02" y2="164.4" stroke="#94b4c0" stroke-width="0.8" opacity="0.4"/><line x1="187.2" y1="0" x2="187.2" y2="164.4" stroke="#94b4c0" stroke-width="0.8" opacity="0.4"/><line x1="203.68" y1="0" x2="203.68" y2="164.4" stroke="#94b4c0" stroke-width="0.8" opacity="0.4"/><line x1="215.38" y1="0" x2="215.38" y2="164.4" stroke="#94b4c0" stroke-width="0.8" opacity="0.4"/><line x1="224.45" y1="0" x2="224.45" y2="164.4" stroke="#94b4c0" stroke-width="0.8" opacity="0.4"/><line x1="231.86" y1="0" x2="231.86" y2="164.4" stroke="#94b4c0" stroke-width="0.8" opacity="0.4"/><line x1="238.12" y1="0" x2="238.12" y2="164.4" stroke="#94b4c0" stroke-width="0.8" opacity="0.4"/><line x1="243.55" y1="0" x2="243.55" y2="164.4" stroke="#94b4c0" stroke-width="0.8" opacity="0.4"/><line x1="248.34" y1="0" x2="248.34" y2="164.4" stroke="#94b4c0" stroke-width="0.8" opacity="0.4"/><line x1="252.62" y1="0" x2="252.62" y2="164.4" stroke="#94b4c0" stroke-width="0.8" opacity="0.4"/><line x1="280.8" y1="0" x2="280.8" y2="164.4" stroke="#94b4c0" stroke-width="0.8" opacity="0.4"/><line x1="0" y1="13.7" x2="288.2" y2="13.7" stroke="#94b4c0" stroke-width="0.8" opacity="0.4"/><line x1="0" y1="27.4" x2="288.2" y2="27.4" stroke="#94b4c0" stroke-width="0.8" opacity="0.4"/><line x1="0" y1="41.1" x2="288.2" y2="41.1" stroke="#94b4c0" stroke-width="0.8" opacity="0.4"/><line x1="0" y1="54.8" x2="288.2" y2="54.8" stroke="#94b4c0" stroke-width="0.8" opacity="0.4"/><line x1="0" y1="68.5" x2="288.2" y2="68.5" stroke="#94b4c0" stroke-width="0.8" opacity="0.4"/><line x1="0" y1="82.2" x2="288.2" y2="82.2" stroke="#94b4c0" stroke-width="0.8" opacity="0.4"/><line x1="0" y1="95.9" x2="288.2" y2="95.9" stroke="#94b4c0" stroke-width="0.8" opacity="0.4"/><line x1="0" y1="109.6" x2="288.2" y2="109.6" stroke="#94b4c0" stroke-width="0.8" opacity="0.4"/><line x1="0" y1="123.3" x2="288.2" y2="123.3" stroke="#94b4c0" stroke-width="0.8" opacity="0.4"/><line x1="0" y1="137.0" x2="288.2" y2="137.0" stroke="#94b4c0" stroke-width="0.8" opacity="0.4"/><line x1="0" y1="150.7" x2="288.2" y2="150.7" stroke="#94b4c0" stroke-width="0.8" opacity="0.4"/><polyline points="0.0,18.77 1.2,18.77 2.4,18.77 3.6,18.77 4.8,18.77 6.0,18.77 7.21,18.77 8.41,18.77 9.61,18.77 10.81,18.77 12.01,18.77 13.21,18.77 14.41,18.77 15.61,18.78 16.81,18.78 18.01,18.78 19.21,18.78 20.41,18.78 21.62,18.78 22.82,18.78 24.02,18.78 25.22,18.78 26.42,18.78 27.62,18.78 28.82,18.78 30.02,18.79 31.22,18.79 32.42,18.79 33.62,18.79 34.83,18.79 36.03,18.8 37.23,18.8 38.43,18.8 39.63,18.8 40.83,18.81 42.03,18.81 43.23,18.81 44.43,18.82 45.63,18.82 46.83,18.83 48.04,18.84 49.24,18.84 50.44,18.85 51.64,18.86 52.84,18.87 54.04,18.88 55.24,18.89 56.44,18.91 57.64,18.92 58.84,18.94 60.04,18.96 61.24,18.98 62.45,19.0 63.65,19.03 64.85,19.06 66.05,19.09 67.25,19.12 68.45,19.17 69.65,19.21 70.85,19.26 72.05,19.32 73.25,19.38 74.45,19.45 75.66,19.53 76.86,19.62 78.06,19.72 79.26,19.83 80.46,19.96 81.66,20.1 82.86,20.25 84.06,20.42 85.26,20.61 86.46,20.83 87.66,21.07 88.87,21.33 90.07,21.62 91.27,21.95 92.47,22.31 93.67,22.71 94.87,23.15 96.07,23.64 97.27,24.17 98.47,24.76 99.67,25.4 100.87,26.1 102.07,26.86 103.28,27.69 104.48,28.59 105.68,29.55 106.88,30.59 108.08,31.7 109.28,32.89 110.48,34.14 111.68,35.47 112.88,36.86 114.08,38.32 115.28,39.85 116.49,41.43 117.69,43.05 118.89,44.73 120.09,46.43 121.29,48.17 122.49,49.92 123.69,51.69 124.89,53.45 126.09,55.21 127.29,56.95 128.49,58.67 129.7,60.36 130.9,62.0 132.1,63.6 133.3,65.15 134.5,66.64 135.7,68.07 136.9,69.44 138.1,70.75 139.3,71.99 140.5,73.16 141.7,74.27 142.9,75.32 144.11,76.31 145.31,77.24 146.51,78.11 147.71,78.94 148.91,79.71 150.11,80.44 151.31,81.14 152.51,81.79 153.71,82.42 154.91,83.02 156.11,83.59 157.32,84.15 158.52,84.69 159.72,85.22 160.92,85.74 162.12,86.25 163.32,86.76 164.52,87.27 165.72,87.78 166.92,88.3 168.12,88.83 169.32,89.36 170.53,89.92 171.73,90.48 172.93,91.06 174.13,91.67 175.33,92.29 176.53,92.94 177.73,93.62 178.93,94.32 180.13,95.05 181.33,95.81 182.53,96.61 183.73,97.44 184.94,98.31 186.14,99.22 187.34,100.17 188.54,101.15 189.74,102.18 190.94,103.26 192.14,104.38 193.34,105.54 194.54,106.75 195.74,108.0 196.94,109.3 198.15,110.65 199.35,112.03 200.55,113.46 201.75,114.92 202.95,116.41 204.15,117.93 205.35,119.47 206.55,121.02 207.75,122.57 208.95,124.1 210.15,125.6 211.36,127.06 212.56,128.45 213.76,129.75 214.96,130.93 216.16,131.98 217.36,132.86 218.56,133.56 219.76,134.06 220.96,134.34 222.16,134.38 223.36,134.19 224.56,133.77 225.77,133.13 226.97,132.28 228.17,131.24 229.37,130.03 230.57,128.69 231.77,127.22 232.97,125.67 234.17,124.04 235.37,122.37 236.57,120.66 237.77,118.94 238.98,117.22 240.18,115.5 241.38,113.81 242.58,112.15 243.78,110.52 244.98,108.93 246.18,107.39 247.38,105.89 248.58,104.44 249.78,103.04 250.98,101.7 252.18,100.4 253.39,99.16 254.59,97.96 255.79,96.82 256.99,95.73 258.19,94.69 259.39,93.69 260.59,92.75 261.79,91.85 262.99,90.99 264.19,90.18 265.39,89.42 266.6,88.69 267.8,88.01 269.0,87.37 270.2,86.76 271.4,86.2 272.6,85.67 273.8,85.18 275.0,84.73 276.2,84.31 277.4,83.93 278.6,83.58 279.81,83.27 281.01,83.0 282.21,82.77 283.41,82.57 284.61,82.41 285.81,82.3 287.01,82.22 288.21,82.2" fill="none" stroke="#52d4dc" stroke-width="1.1"/><path d="M65.42 78.7 Q65.42 82.2 68.02 82.2 Q65.42 82.2 65.42 85.2 Q65.42 82.2 62.82 82.2 Q65.42 82.2 65.42 78.7Z" fill="#f0f060" stroke="#f0f060" stroke-width="0.5"/><text x="66.42" y="94.4" font-family="Liberation Sans" font-size="11.6" fill="#e6e63c" text-anchor="middle">f0-PK</text><path d="M187.2 78.7 Q187.2 82.2 189.8 82.2 Q187.2 82.2 187.2 85.2 Q187.2 82.2 184.6 82.2 Q187.2 82.2 187.2 78.7Z" fill="#f0f060" stroke="#f0f060" stroke-width="0.5"/><text x="188.2" y="94.4" font-family="Liberation Sans" font-size="11.6" fill="#e6e63c" text-anchor="middle">f1-PK</text><path d="M221.79 130.9 Q221.79 134.4 224.39 134.4 Q221.79 134.4 221.79 137.4 Q221.79 134.4 219.19 134.4 Q221.79 134.4 221.79 130.9Z" fill="#f0f060" stroke="#f0f060" stroke-width="0.5"/><text x="222.79" y="146.6" font-family="Liberation Sans" font-size="11.6" fill="#e6e63c" text-anchor="middle">f2-PK</text><path d="M123.47 15.27 Q123.47 18.77 126.07 18.77 Q123.47 18.77 123.47 21.77 Q123.47 18.77 120.87 18.77 Q123.47 18.77 123.47 15.27Z" fill="#f0f060" stroke="#f0f060" stroke-width="0.5"/><text x="124.47" y="30.97" font-family="Liberation Sans" font-size="11.6" fill="#e6e63c" text-anchor="middle">f3-LS</text></svg>
<div class="t" style="left:-206.2px;width:600px;text-align:center;top:866.2px;height:9.8px;line-height:9.8px;font-size:7px;font-weight:normal;color:#606060;">12</div>
<div class="t" style="left:-206.2px;width:600px;text-align:center;top:879.9px;height:9.8px;line-height:9.8px;font-size:7px;font-weight:normal;color:#606060;">10</div>
<div class="t" style="left:-206.2px;width:600px;text-align:center;top:893.6px;height:9.8px;line-height:9.8px;font-size:7px;font-weight:normal;color:#606060;">8</div>
<div class="t" style="left:-206.2px;width:600px;text-align:center;top:907.3px;height:9.8px;line-height:9.8px;font-size:7px;font-weight:normal;color:#606060;">6</div>
<div class="t" style="left:-206.2px;width:600px;text-align:center;top:921.0px;height:9.8px;line-height:9.8px;font-size:7px;font-weight:normal;color:#606060;">4</div>
<div class="t" style="left:-206.2px;width:600px;text-align:center;top:934.7px;height:9.8px;line-height:9.8px;font-size:7px;font-weight:normal;color:#606060;">2</div>
<div class="t" style="left:-206.2px;width:600px;text-align:center;top:948.4px;height:9.8px;line-height:9.8px;font-size:7px;font-weight:normal;color:#606060;">0</div>
<div class="t" style="left:-206.2px;width:600px;text-align:center;top:962.1px;height:9.8px;line-height:9.8px;font-size:7px;font-weight:normal;color:#606060;">-2</div>
<div class="t" style="left:-206.2px;width:600px;text-align:center;top:975.8px;height:9.8px;line-height:9.8px;font-size:7px;font-weight:normal;color:#606060;">-4</div>
<div class="t" style="left:-206.2px;width:600px;text-align:center;top:989.5px;height:9.8px;line-height:9.8px;font-size:7px;font-weight:normal;color:#606060;">-6</div>
<div class="t" style="left:-206.2px;width:600px;text-align:center;top:1003.2px;height:9.8px;line-height:9.8px;font-size:7px;font-weight:normal;color:#606060;">-8</div>
<div class="t" style="left:-206.2px;width:600px;text-align:center;top:1016.9px;height:9.8px;line-height:9.8px;font-size:7px;font-weight:normal;color:#606060;">-10</div>
<div class="t" style="left:-206.2px;width:600px;text-align:center;top:1030.6px;height:9.8px;line-height:9.8px;font-size:7px;font-weight:normal;color:#606060;">-12</div>
<div class="t" style="left:-195.6px;width:600px;text-align:center;top:1036.6px;height:9.8px;line-height:9.8px;font-size:7px;font-weight:normal;color:#606060;">20</div>
<div class="t" style="left:-134.18px;width:600px;text-align:center;top:1036.6px;height:9.8px;line-height:9.8px;font-size:7px;font-weight:normal;color:#606060;">100</div>
<div class="t" style="left:-40.58px;width:600px;text-align:center;top:1036.6px;height:9.8px;line-height:9.8px;font-size:7px;font-weight:normal;color:#606060;">1K</div>
<div class="t" style="left:53.02px;width:600px;text-align:center;top:1036.6px;height:9.8px;line-height:9.8px;font-size:7px;font-weight:normal;color:#606060;">10K</div>
<div class="t" style="left:83.61px;width:600px;text-align:center;top:1036.6px;height:9.8px;line-height:9.8px;font-size:7px;font-weight:normal;color:#606060;">24K</div>
<div style="left:411px;top:871px;width:193.7px;height:25px;border:1px solid #8a8a8a;border-radius:2px;"></div>
<div style="left:414px;top:868px;width:90px;height:6px;background:#cfcfcf;"></div>
<div class="t" style="left:415.5px;top:868.2px;height:11.2px;line-height:11.2px;font-size:8px;font-weight:bold;color:#1a1a1a;">Pre-Gain (-96dB~18dB)</div>
<div style="left:414.5px;top:880px;width:38.5px;height:12px;border:1px solid #b8b8b8;background:#d2d2d2;"></div>
<div class="t" style="left:418px;top:881.2px;height:11.2px;line-height:11.2px;font-size:8px;font-weight:normal;color:#1a1a1a;">0.00</div>
<svg style="position:absolute;left:444px;top:880px;" width="10" height="12" viewBox="0 0 10 12"><path d="M5 1.5 l-2 2.5 h4z M5 10.5 l-2 -2.5 h4z" fill="#222"/></svg>
<div style="left:455.7px;top:885.5px;width:145.3px;height:1.5px;background:#8c8c8c;"></div>
<div style="left:567px;top:880px;width:13px;height:12px;background:linear-gradient(90deg,#e8e8e8 0,#e8e8e8 20%,#555 20%,#555 32%,#f0f0f0 32%,#f0f0f0 50%,#555 50%,#555 62%,#e0e0e0 62%);border:1px solid #777;"></div>
<div style="left:411px;top:905px;width:193.5px;height:143.5px;border:1px solid #8a8a8a;border-radius:2px;"></div>
<div style="left:414px;top:902px;width:28px;height:6px;background:#cfcfcf;"></div>
<div class="t" style="left:415px;top:901.7px;height:11.2px;line-height:11.2px;font-size:8px;font-weight:bold;color:#151515;">Filters</div>
<div style="left:418.2px;top:914.45px;width:7.5px;height:7.5px;border:1px solid #a0a0a0;background:linear-gradient(#c2c2c2,#b2b2b2);"></div>
<svg style="position:absolute;left:418.2px;top:914.45px;" width="7.5" height="7.5" viewBox="0 0 7.5 7.5"><path d="M1.35 3.6 L3.0 5.85 L6.38 1.12" fill="none" stroke="#1a1a1a" stroke-width="1.3"/></svg>
<div class="t" style="left:428.7px;top:912.98px;height:12.04px;line-height:12.04px;font-size:8.6px;font-weight:normal;color:#333;">f0</div>
<div style="left:455.7px;top:914.45px;width:7.5px;height:7.5px;border:1px solid #a0a0a0;background:linear-gradient(#c2c2c2,#b2b2b2);"></div>
<svg style="position:absolute;left:455.7px;top:914.45px;" width="7.5" height="7.5" viewBox="0 0 7.5 7.5"><path d="M1.35 3.6 L3.0 5.85 L6.38 1.12" fill="none" stroke="#1a1a1a" stroke-width="1.3"/></svg>
<div class="t" style="left:466.2px;top:912.98px;height:12.04px;line-height:12.04px;font-size:8.6px;font-weight:normal;color:#333;">f1</div>
<div style="left:492.4px;top:914.45px;width:7.5px;height:7.5px;border:1px solid #a0a0a0;background:linear-gradient(#c2c2c2,#b2b2b2);"></div>
<svg style="position:absolute;left:492.4px;top:914.45px;" width="7.5" height="7.5" viewBox="0 0 7.5 7.5"><path d="M1.35 3.6 L3.0 5.85 L6.38 1.12" fill="none" stroke="#1a1a1a" stroke-width="1.3"/></svg>
<div class="t" style="left:502.9px;top:912.98px;height:12.04px;line-height:12.04px;font-size:8.6px;font-weight:normal;color:#333;">f2</div>
<div style="left:529.6px;top:914.45px;width:7.5px;height:7.5px;border:1px solid #a0a0a0;background:linear-gradient(#c2c2c2,#b2b2b2);"></div>
<svg style="position:absolute;left:529.6px;top:914.45px;" width="7.5" height="7.5" viewBox="0 0 7.5 7.5"><path d="M1.35 3.6 L3.0 5.85 L6.38 1.12" fill="none" stroke="#1a1a1a" stroke-width="1.3"/></svg>
<div class="t" style="left:540.1px;top:912.98px;height:12.04px;line-height:12.04px;font-size:8.6px;font-weight:normal;color:#333;">f3</div>
<div style="left:566.6px;top:914.45px;width:7.5px;height:7.5px;border:1px solid #a0a0a0;background:linear-gradient(#c2c2c2,#b2b2b2);"></div>
<div class="t" style="left:577.1px;top:912.98px;height:12.04px;line-height:12.04px;font-size:8.6px;font-weight:normal;color:#333;">f4</div>
<div style="left:418.2px;top:927.15px;width:7.5px;height:7.5px;border:1px solid #a0a0a0;background:linear-gradient(#c2c2c2,#b2b2b2);"></div>
<div class="t" style="left:428.7px;top:925.68px;height:12.04px;line-height:12.04px;font-size:8.6px;font-weight:normal;color:#333;">f5</div>
<div style="left:455.7px;top:927.15px;width:7.5px;height:7.5px;border:1px solid #a0a0a0;background:linear-gradient(#c2c2c2,#b2b2b2);"></div>
<div class="t" style="left:466.2px;top:925.68px;height:12.04px;line-height:12.04px;font-size:8.6px;font-weight:normal;color:#333;">f6</div>
<div style="left:492.4px;top:927.15px;width:7.5px;height:7.5px;border:1px solid #a0a0a0;background:linear-gradient(#c2c2c2,#b2b2b2);"></div>
<div class="t" style="left:502.9px;top:925.68px;height:12.04px;line-height:12.04px;font-size:8.6px;font-weight:normal;color:#333;">f7</div>
<div style="left:529.6px;top:927.15px;width:7.5px;height:7.5px;border:1px solid #a0a0a0;background:linear-gradient(#c2c2c2,#b2b2b2);"></div>
<div class="t" style="left:540.1px;top:925.68px;height:12.04px;line-height:12.04px;font-size:8.6px;font-weight:normal;color:#333;">f8</div>
<div style="left:566.6px;top:927.15px;width:7.5px;height:7.5px;border:1px solid #a0a0a0;background:linear-gradient(#c2c2c2,#b2b2b2);"></div>
<div class="t" style="left:577.1px;top:925.68px;height:12.04px;line-height:12.04px;font-size:8.6px;font-weight:normal;color:#333;">f9</div>
<div style="left:417.6px;top:940px;width:154.9px;height:92px;border:1px solid #9a9a9a;background:#c9c9c9;"></div>
<div style="left:428.3px;top:940px;width:1.0px;height:92px;background:#9a9a9a;"></div>
<div style="left:468.9px;top:940px;width:1.0px;height:92px;background:#9a9a9a;"></div>
<div style="left:503.1px;top:940px;width:1.0px;height:92px;background:#9a9a9a;"></div>
<div style="left:537.5px;top:940px;width:1.0px;height:92px;background:#9a9a9a;"></div>
<div style="left:417.6px;top:955.5px;width:154.9px;height:1.0px;background:#9a9a9a;"></div>
<div style="left:417.6px;top:974.5px;width:154.9px;height:1.0px;background:#9a9a9a;"></div>
<div style="left:417.6px;top:993.5px;width:154.9px;height:1.0px;background:#9a9a9a;"></div>
<div style="left:417.6px;top:1012.5px;width:154.9px;height:1.0px;background:#9a9a9a;"></div>
<div class="t" style="left:148.4px;width:600px;text-align:center;top:942.92px;height:11.76px;line-height:11.76px;font-size:8.4px;font-weight:normal;color:#2a2a2a;">Type</div>
<div class="t" style="left:186px;width:600px;text-align:center;top:942.92px;height:11.76px;line-height:11.76px;font-size:8.4px;font-weight:normal;color:#2a2a2a;">Fc</div>
<div class="t" style="left:220.4px;width:600px;text-align:center;top:942.92px;height:11.76px;line-height:11.76px;font-size:8.4px;font-weight:normal;color:#2a2a2a;">Gain</div>
<div class="t" style="left:255px;width:600px;text-align:center;top:942.92px;height:11.76px;line-height:11.76px;font-size:8.4px;font-weight:normal;color:#2a2a2a;">Q</div>
<div class="t" style="left:123px;width:600px;text-align:center;top:960.56px;height:11.48px;line-height:11.48px;font-size:8.2px;font-weight:normal;color:#333;">f0</div>
<svg style="position:absolute;left:431px;top:959.5px;" width="27" height="12" viewBox="0 0 27 12"><path d="M0 4.5 H7.5 M0 7.5 H7.5 M7 6 L13 1 L19 6 L13 11 Z M18.5 4.5 H26 M18.5 7.5 H26" fill="none" stroke="#1a1a1a" stroke-width="1"/></svg>
<svg style="position:absolute;left:459px;top:961.5px;" width="10" height="8" viewBox="0 0 10 8"><path d="M3 2.5 h4.5 l-2.25 3.2z" fill="#222"/></svg>
<div class="t" style="left:474px;top:960.7px;height:11.2px;line-height:11.2px;font-size:8px;font-weight:normal;color:#333;">100</div>
<div class="t" style="left:508px;top:960.7px;height:11.2px;line-height:11.2px;font-size:8px;font-weight:normal;color:#333;">0.00</div>
<div class="t" style="left:540px;top:960.7px;height:11.2px;line-height:11.2px;font-size:8px;font-weight:normal;color:#333;">0.707</div>
<div class="t" style="left:123px;width:600px;text-align:center;top:979.56px;height:11.48px;line-height:11.48px;font-size:8.2px;font-weight:normal;color:#333;">f1</div>
<svg style="position:absolute;left:431px;top:978.5px;" width="27" height="12" viewBox="0 0 27 12"><path d="M0 4.5 H7.5 M0 7.5 H7.5 M7 6 L13 1 L19 6 L13 11 Z M18.5 4.5 H26 M18.5 7.5 H26" fill="none" stroke="#1a1a1a" stroke-width="1"/></svg>
<svg style="position:absolute;left:459px;top:980.5px;" width="10" height="8" viewBox="0 0 10 8"><path d="M3 2.5 h4.5 l-2.25 3.2z" fill="#222"/></svg>
<div class="t" style="left:474px;top:979.7px;height:11.2px;line-height:11.2px;font-size:8px;font-weight:normal;color:#333;">2000</div>
<div class="t" style="left:508px;top:979.7px;height:11.2px;line-height:11.2px;font-size:8px;font-weight:normal;color:#333;">0.00</div>
<div class="t" style="left:540px;top:979.7px;height:11.2px;line-height:11.2px;font-size:8px;font-weight:normal;color:#333;">0.707</div>
<div class="t" style="left:123px;width:600px;text-align:center;top:998.56px;height:11.48px;line-height:11.48px;font-size:8.2px;font-weight:normal;color:#333;">f2</div>
<svg style="position:absolute;left:431px;top:997.5px;" width="27" height="12" viewBox="0 0 27 12"><path d="M2 6 H7 M7 6 L13 1 L19 6 L13 11 Z M19 6 H25" fill="none" stroke="#1a1a1a" stroke-width="1"/></svg>
<svg style="position:absolute;left:459px;top:999.5px;" width="10" height="8" viewBox="0 0 10 8"><path d="M3 2.5 h4.5 l-2.25 3.2z" fill="#222"/></svg>
<div class="t" style="left:474px;top:998.7px;height:11.2px;line-height:11.2px;font-size:8px;font-weight:normal;color:#333;">4684</div>
<div class="t" style="left:508px;top:998.7px;height:11.2px;line-height:11.2px;font-size:8px;font-weight:normal;color:#333;">-7.62</div>
<div class="t" style="left:540px;top:998.7px;height:11.2px;line-height:11.2px;font-size:8px;font-weight:normal;color:#333;">0.707</div>
<div class="t" style="left:123px;width:600px;text-align:center;top:1017.56px;height:11.48px;line-height:11.48px;font-size:8.2px;font-weight:normal;color:#333;">f3</div>
<svg style="position:absolute;left:431px;top:1016.5px;" width="27" height="12" viewBox="0 0 27 12"><path d="M1 1.5 Q6 1.5 8 4 Q10 6 12 6 H24 M1 10.5 Q6 10.5 8 8 Q10 6 12 6" fill="none" stroke="#222" stroke-width="1.1"/></svg>
<svg style="position:absolute;left:459px;top:1018.5px;" width="10" height="8" viewBox="0 0 10 8"><path d="M3 2.5 h4.5 l-2.25 3.2z" fill="#222"/></svg>
<div class="t" style="left:474px;top:1017.7px;height:11.2px;line-height:11.2px;font-size:8px;font-weight:normal;color:#333;">417</div>
<div class="t" style="left:508px;top:1017.7px;height:11.2px;line-height:11.2px;font-size:8px;font-weight:normal;color:#333;">9.26</div>
<div class="t" style="left:540px;top:1017.7px;height:11.2px;line-height:11.2px;font-size:8px;font-weight:normal;color:#333;">0.707</div>
<svg style="position:absolute;left:613px;top:951px;" width="16" height="12" viewBox="0 0 16 12"><path d="M1 1.5 L6 6 L1 10.5 M7 1.5 L12 6 L7 10.5" fill="none" stroke="#3aa63a" stroke-width="2.2"/></svg>
<div style="left:197px;top:1072px;width:471px;height:1.2px;background:#8a8a8a;"></div>
<div style="left:75.5px;top:1073px;width:592.5px;height:106px;border-left:1px solid #7a7a7a;"></div>
<div style="left:70px;top:1065px;width:127px;height:6px;background:#cfcfcf;"></div>
<svg style="position:absolute;left:74.8px;top:1064.8px;" width="18.4" height="18.4" viewBox="0 0 18.4 18.4"><path d="M11.96 4.79 A5.2 5.2 0 1 1 6.44 4.79" fill="none" stroke="#555" stroke-width="1.8" stroke-linecap="round"/><path d="M9.2 3.4 V9.8" stroke="#555" stroke-width="1.8" stroke-linecap="round"/></svg>
<div class="t" style="left:94.7px;top:1069.7px;height:11.2px;line-height:11.2px;font-size:8px;font-weight:bold;color:#151515;">Music Out Eq</div>
<div class="t" style="left:168px;top:1069.7px;height:11.2px;line-height:11.2px;font-size:8px;font-weight:bold;color:#151515;">( 0xa0 )</div>
<div style="left:87.3px;top:1089.3px;width:304.7px;height:181.7px;background:#353535;border:1px solid #262626;"></div>
<svg style="position:absolute;left:100.4px;top:1092.3px;" width="288.2" height="164.4" viewBox="0 0 288.2 164.4"><defs><linearGradient id="g1089" x1="0" y1="1" x2="1" y2="0"><stop offset="0" stop-color="#24404f"/><stop offset="0.5" stop-color="#22404f"/><stop offset="0.5" stop-color="#1b3343"/><stop offset="1" stop-color="#1d3444"/></linearGradient></defs><rect x="0" y="0" width="288.2" height="164.4" fill="url(#g1089)"/><polygon points="0,164.4 288.2,0 288.2,164.4" fill="#1b2d3c"/><polygon points="0,0 288.2,0 0,164.4" fill="#213a49"/><line x1="16.48" y1="0" x2="16.48" y2="164.4" stroke="#94b4c0" stroke-width="0.8" opacity="0.4"/><line x1="28.18" y1="0" x2="28.18" y2="164.4" stroke="#94b4c0" stroke-width="0.8" opacity="0.4"/><line x1="37.25" y1="0" x2="37.25" y2="164.4" stroke="#94b4c0" stroke-width="0.8" opacity="0.4"/><line x1="44.66" y1="0" x2="44.66" y2="164.4" stroke="#94b4c0" stroke-width="0.8" opacity="0.4"/><line x1="50.92" y1="0" x2="50.92" y2="164.4" stroke="#94b4c0" stroke-width="0.8" opacity="0.4"/><line x1="56.35" y1="0" x2="56.35" y2="164.4" stroke="#94b4c0" stroke-width="0.8" opacity="0.4"/><line x1="61.14" y1="0" x2="61.14" y2="164.4" stroke="#94b4c0" stroke-width="0.8" opacity="0.4"/><line x1="65.42" y1="0" x2="65.42" y2="164.4" stroke="#94b4c0" stroke-width="0.8" opacity="0.4"/><line x1="93.6" y1="0" x2="93.6" y2="164.4" stroke="#94b4c0" stroke-width="0.8" opacity="0.4"/><line x1="110.08" y1="0" x2="110.08" y2="164.4" stroke="#94b4c0" stroke-width="0.8" opacity="0.4"/><line x1="121.78" y1="0" x2="121.78" y2="164.4" stroke="#94b4c0" stroke-width="0.8" opacity="0.4"/><line x1="130.85" y1="0" x2="130.85" y2="164.4" stroke="#94b4c0" stroke-width="0.8" opacity="0.4"/><line x1="138.26" y1="0" x2="138.26" y2="164.4" stroke="#94b4c0" stroke-width="0.8" opacity="0.4"/><line x1="144.52" y1="0" x2="144.52" y2="164.4" stroke="#94b4c0" stroke-width="0.8" opacity="0.4"/><line x1="149.95" y1="0" x2="149.95" y2="164.4" stroke="#94b4c0" stroke-width="0.8" opacity="0.4"/><line x1="154.74" y1="0" x2="154.74" y2="164.4" stroke="#94b4c0" stroke-width="0.8" opacity="0.4"/><line x1="159.02" y1="0" x2="159.02" y2="164.4" stroke="#94b4c0" stroke-width="0.8" opacity="0.4"/><line x1="187.2" y1="0" x2="187.2" y2="164.4" stroke="#94b4c0" stroke-width="0.8" opacity="0.4"/><line x1="203.68" y1="0" x2="203.68" y2="164.4" stroke="#94b4c0" stroke-width="0.8" opacity="0.4"/><line x1="215.38" y1="0" x2="215.38" y2="164.4" stroke="#94b4c0" stroke-width="0.8" opacity="0.4"/><line x1="224.45" y1="0" x2="224.45" y2="164.4" stroke="#94b4c0" stroke-width="0.8" opacity="0.4"/><line x1="231.86" y1="0" x2="231.86" y2="164.4" stroke="#94b4c0" stroke-width="0.8" opacity="0.4"/><line x1="238.12" y1="0" x2="238.12" y2="164.4" stroke="#94b4c0" stroke-width="0.8" opacity="0.4"/><line x1="243.55" y1="0" x2="243.55" y2="164.4" stroke="#94b4c0" stroke-width="0.8" opacity="0.4"/><line x1="248.34" y1="0" x2="248.34" y2="164.4" stroke="#94b4c0" stroke-width="0.8" opacity="0.4"/><line x1="252.62" y1="0" x2="252.62" y2="164.4" stroke="#94b4c0" stroke-width="0.8" opacity="0.4"/><line x1="280.8" y1="0" x2="280.8" y2="164.4" stroke="#94b4c0" stroke-width="0.8" opacity="0.4"/><line x1="0" y1="13.7" x2="288.2" y2="13.7" stroke="#94b4c0" stroke-width="0.8" opacity="0.4"/><line x1="0" y1="27.4" x2="288.2" y2="27.4" stroke="#94b4c0" stroke-width="0.8" opacity="0.4"/><line x1="0" y1="41.1" x2="288.2" y2="41.1" stroke="#94b4c0" stroke-width="0.8" opacity="0.4"/><line x1="0" y1="54.8" x2="288.2" y2="54.8" stroke="#94b4c0" stroke-width="0.8" opacity="0.4"/><line x1="0" y1="68.5" x2="288.2" y2="68.5" stroke="#94b4c0" stroke-width="0.8" opacity="0.4"/><line x1="0" y1="82.2" x2="288.2" y2="82.2" stroke="#94b4c0" stroke-width="0.8" opacity="0.4"/><line x1="0" y1="95.9" x2="288.2" y2="95.9" stroke="#94b4c0" stroke-width="0.8" opacity="0.4"/><line x1="0" y1="109.6" x2="288.2" y2="109.6" stroke="#94b4c0" stroke-width="0.8" opacity="0.4"/><line x1="0" y1="123.3" x2="288.2" y2="123.3" stroke="#94b4c0" stroke-width="0.8" opacity="0.4"/><line x1="0" y1="137.0" x2="288.2" y2="137.0" stroke="#94b4c0" stroke-width="0.8" opacity="0.4"/><line x1="0" y1="150.7" x2="288.2" y2="150.7" stroke="#94b4c0" stroke-width="0.8" opacity="0.4"/><polyline points="0.0,82.2 1.2,82.2 2.4,82.2 3.6,82.2 4.8,82.2 6.0,82.2 7.21,82.2 8.41,82.2 9.61,82.2 10.81,82.2 12.01,82.2 13.21,82.2 14.41,82.2 15.61,82.2 16.81,82.2 18.01,82.2 19.21,82.2 20.41,82.2 21.62,82.2 22.82,82.2 24.02,82.2 25.22,82.2 26.42,82.2 27.62,82.2 28.82,82.2 30.02,82.2 31.22,82.2 32.42,82.2 33.62,82.2 34.83,82.2 36.03,82.2 37.23,82.2 38.43,82.2 39.63,82.2 40.83,82.2 42.03,82.2 43.23,82.2 44.43,82.2 45.63,82.2 46.83,82.2 48.04,82.2 49.24,82.2 50.44,82.2 51.64,82.2 52.84,82.2 54.04,82.2 55.24,82.2 56.44,82.2 57.64,82.2 58.84,82.2 60.04,82.2 61.24,82.2 62.45,82.2 63.65,82.2 64.85,82.2 66.05,82.2 67.25,82.2 68.45,82.2 69.65,82.2 70.85,82.2 72.05,82.2 73.25,82.2 74.45,82.2 75.66,82.2 76.86,82.2 78.06,82.2 79.26,82.2 80.46,82.2 81.66,82.2 82.86,82.2 84.06,82.2 85.26,82.2 86.46,82.2 87.66,82.2 88.87,82.2 90.07,82.2 91.27,82.2 92.47,82.2 93.67,82.2 94.87,82.2 96.07,82.2 97.27,82.2 98.47,82.2 99.67,82.2 100.87,82.2 102.07,82.2 103.28,82.2 104.48,82.2 105.68,82.2 106.88,82.2 108.08,82.2 109.28,82.2 110.48,82.2 111.68,82.2 112.88,82.2 114.08,82.2 115.28,82.2 116.49,82.2 117.69,82.2 118.89,82.2 120.09,82.2 121.29,82.2 122.49,82.2 123.69,82.2 124.89,82.2 126.09,82.2 127.29,82.2 128.49,82.2 129.7,82.2 130.9,82.2 132.1,82.2 133.3,82.2 134.5,82.2 135.7,82.2 136.9,82.2 138.1,82.2 139.3,82.2 140.5,82.2 141.7,82.2 142.9,82.2 144.11,82.2 145.31,82.2 146.51,82.2 147.71,82.2 148.91,82.2 150.11,82.2 151.31,82.2 152.51,82.2 153.71,82.2 154.91,82.2 156.11,82.2 157.32,82.2 158.52,82.2 159.72,82.2 160.92,82.2 162.12,82.2 163.32,82.2 164.52,82.2 165.72,82.2 166.92,82.2 168.12,82.2 169.32,82.2 170.53,82.2 171.73,82.2 172.93,82.2 174.13,82.2 175.33,82.2 176.53,82.2 177.73,82.2 178.93,82.2 180.13,82.2 181.33,82.2 182.53,82.2 183.73,82.2 184.94,82.2 186.14,82.2 187.34,82.2 188.54,82.2 189.74,82.2 190.94,82.2 192.14,82.2 193.34,82.2 194.54,82.2 195.74,82.2 196.94,82.2 198.15,82.2 199.35,82.2 200.55,82.2 201.75,82.2 202.95,82.2 204.15,82.2 205.35,82.2 206.55,82.2 207.75,82.2 208.95,82.2 210.15,82.2 211.36,82.2 212.56,82.2 213.76,82.2 214.96,82.2 216.16,82.2 217.36,82.2 218.56,82.2 219.76,82.2 220.96,82.2 222.16,82.2 223.36,82.2 224.56,82.2 225.77,82.2 226.97,82.2 228.17,82.2 229.37,82.2 230.57,82.2 231.77,82.2 232.97,82.2 234.17,82.2 235.37,82.2 236.57,82.2 237.77,82.2 238.98,82.2 240.18,82.2 241.38,82.2 242.58,82.2 243.78,82.2 244.98,82.2 246.18,82.2 247.38,82.2 248.58,82.2 249.78,82.2 250.98,82.2 252.18,82.2 253.39,82.2 254.59,82.2 255.79,82.2 256.99,82.2 258.19,82.2 259.39,82.2 260.59,82.2 261.79,82.2 262.99,82.2 264.19,82.2 265.39,82.2 266.6,82.2 267.8,82.2 269.0,82.2 270.2,82.2 271.4,82.2 272.6,82.2 273.8,82.2 275.0,82.2 276.2,82.2 277.4,82.2 278.6,82.2 279.81,82.2 281.01,82.2 282.21,82.2 283.41,82.2 284.61,82.2 285.81,82.2 287.01,82.2 288.21,82.2" fill="none" stroke="#52d4dc" stroke-width="1.1"/><path d="M65.42 78.7 Q65.42 82.2 68.02 82.2 Q65.42 82.2 65.42 85.2 Q65.42 82.2 62.82 82.2 Q65.42 82.2 65.42 78.7Z" fill="#f0f060" stroke="#f0f060" stroke-width="0.5"/><text x="66.42" y="94.4" font-family="Liberation Sans" font-size="11.6" fill="#e6e63c" text-anchor="middle">f0-PK</text><path d="M187.2 78.7 Q187.2 82.2 189.8 82.2 Q187.2 82.2 187.2 85.2 Q187.2 82.2 184.6 82.2 Q187.2 82.2 187.2 78.7Z" fill="#f0f060" stroke="#f0f060" stroke-width="0.5"/><text x="188.2" y="94.4" font-family="Liberation Sans" font-size="11.6" fill="#e6e63c" text-anchor="middle">f1-PK</text></svg>
<div class="t" style="left:-206.2px;width:600px;text-align:center;top:1088.2px;height:9.8px;line-height:9.8px;font-size:7px;font-weight:normal;color:#606060;">12</div>
<div class="t" style="left:-206.2px;width:600px;text-align:center;top:1101.9px;height:9.8px;line-height:9.8px;font-size:7px;font-weight:normal;color:#606060;">10</div>
<div class="t" style="left:-206.2px;width:600px;text-align:center;top:1115.6px;height:9.8px;line-height:9.8px;font-size:7px;font-weight:normal;color:#606060;">8</div>
<div class="t" style="left:-206.2px;width:600px;text-align:center;top:1129.3px;height:9.8px;line-height:9.8px;font-size:7px;font-weight:normal;color:#606060;">6</div>
<div class="t" style="left:-206.2px;width:600px;text-align:center;top:1143.0px;height:9.8px;line-height:9.8px;font-size:7px;font-weight:normal;color:#606060;">4</div>
<div class="t" style="left:-206.2px;width:600px;text-align:center;top:1156.7px;height:9.8px;line-height:9.8px;font-size:7px;font-weight:normal;color:#606060;">2</div>
<div class="t" style="left:-206.2px;width:600px;text-align:center;top:1170.4px;height:9.8px;line-height:9.8px;font-size:7px;font-weight:normal;color:#606060;">0</div>
<div class="t" style="left:-206.2px;width:600px;text-align:center;top:1184.1px;height:9.8px;line-height:9.8px;font-size:7px;font-weight:normal;color:#606060;">-2</div>
<div class="t" style="left:-206.2px;width:600px;text-align:center;top:1197.8px;height:9.8px;line-height:9.8px;font-size:7px;font-weight:normal;color:#606060;">-4</div>
<div class="t" style="left:-206.2px;width:600px;text-align:center;top:1211.5px;height:9.8px;line-height:9.8px;font-size:7px;font-weight:normal;color:#606060;">-6</div>
<div class="t" style="left:-206.2px;width:600px;text-align:center;top:1225.2px;height:9.8px;line-height:9.8px;font-size:7px;font-weight:normal;color:#606060;">-8</div>
<div class="t" style="left:-206.2px;width:600px;text-align:center;top:1238.9px;height:9.8px;line-height:9.8px;font-size:7px;font-weight:normal;color:#606060;">-10</div>
<div class="t" style="left:-206.2px;width:600px;text-align:center;top:1252.6px;height:9.8px;line-height:9.8px;font-size:7px;font-weight:normal;color:#606060;">-12</div>
<div class="t" style="left:-195.6px;width:600px;text-align:center;top:1258.6px;height:9.8px;line-height:9.8px;font-size:7px;font-weight:normal;color:#606060;">20</div>
<div class="t" style="left:-134.18px;width:600px;text-align:center;top:1258.6px;height:9.8px;line-height:9.8px;font-size:7px;font-weight:normal;color:#606060;">100</div>
<div class="t" style="left:-40.58px;width:600px;text-align:center;top:1258.6px;height:9.8px;line-height:9.8px;font-size:7px;font-weight:normal;color:#606060;">1K</div>
<div class="t" style="left:53.02px;width:600px;text-align:center;top:1258.6px;height:9.8px;line-height:9.8px;font-size:7px;font-weight:normal;color:#606060;">10K</div>
<div class="t" style="left:83.61px;width:600px;text-align:center;top:1258.6px;height:9.8px;line-height:9.8px;font-size:7px;font-weight:normal;color:#606060;">24K</div>
<div style="left:411px;top:1093px;width:193.7px;height:25px;border:1px solid #8a8a8a;border-radius:2px;"></div>
<div style="left:414px;top:1090px;width:90px;height:6px;background:#cfcfcf;"></div>
<div class="t" style="left:415.5px;top:1090.2px;height:11.2px;line-height:11.2px;font-size:8px;font-weight:bold;color:#222;">Pre-Gain (-96dB~18dB)</div>
<div style="left:414.5px;top:1102px;width:38.5px;height:12px;border:1px solid #bcbcbc;background:#cbcbcb;"></div>
<div class="t" style="left:418px;top:1103.2px;height:11.2px;line-height:11.2px;font-size:8px;font-weight:normal;color:#a8a8a8;">0.00</div>
<div style="left:455.7px;top:1107.5px;width:145.3px;height:1.5px;background:#8c8c8c;"></div>
<div style="left:567px;top:1102px;width:13px;height:12px;background:linear-gradient(90deg,#e8e8e8 0,#e8e8e8 20%,#555 20%,#555 32%,#f0f0f0 32%,#f0f0f0 50%,#555 50%,#555 62%,#e0e0e0 62%);border:1px solid #777;"></div>
<div style="left:411px;top:1127px;width:193.5px;height:143.5px;border:1px solid #8a8a8a;border-radius:2px;"></div>
<div style="left:414px;top:1124px;width:28px;height:6px;background:#cfcfcf;"></div>
<div class="t" style="left:415px;top:1123.7px;height:11.2px;line-height:11.2px;font-size:8px;font-weight:bold;color:#151515;">Filters</div>
<div style="left:418.2px;top:1136.45px;width:7.5px;height:7.5px;border:1px solid #a0a0a0;background:linear-gradient(#c2c2c2,#b2b2b2);background:none;border-color:transparent;"></div>
<svg style="position:absolute;left:418.2px;top:1136.45px;" width="7.5" height="7.5" viewBox="0 0 7.5 7.5"><path d="M1.35 3.6 L3.0 5.85 L6.38 1.12" fill="none" stroke="#1a1a1a" stroke-width="1.3"/></svg>
<div class="t" style="left:428.7px;top:1134.98px;height:12.04px;line-height:12.04px;font-size:8.6px;font-weight:normal;color:#333;">f0</div>
<div style="left:455.7px;top:1136.45px;width:7.5px;height:7.5px;border:1px solid #a0a0a0;background:linear-gradient(#c2c2c2,#b2b2b2);background:none;border-color:transparent;"></div>
<svg style="position:absolute;left:455.7px;top:1136.45px;" width="7.5" height="7.5" viewBox="0 0 7.5 7.5"><path d="M1.35 3.6 L3.0 5.85 L6.38 1.12" fill="none" stroke="#1a1a1a" stroke-width="1.3"/></svg>
<div class="t" style="left:466.2px;top:1134.98px;height:12.04px;line-height:12.04px;font-size:8.6px;font-weight:normal;color:#333;">f1</div>
<div style="left:492.4px;top:1136.45px;width:7.5px;height:7.5px;border:1px solid #a0a0a0;background:linear-gradient(#c2c2c2,#b2b2b2);background:#d6d6d6;border-color:#c8c8c8;"></div>
<div class="t" style="left:502.9px;top:1134.98px;height:12.04px;line-height:12.04px;font-size:8.6px;font-weight:normal;color:#333;">f2</div>
<div style="left:529.6px;top:1136.45px;width:7.5px;height:7.5px;border:1px solid #a0a0a0;background:linear-gradient(#c2c2c2,#b2b2b2);background:#d6d6d6;border-color:#c8c8c8;"></div>
<div class="t" style="left:540.1px;top:1134.98px;height:12.04px;line-height:12.04px;font-size:8.6px;font-weight:normal;color:#333;">f3</div>
<div style="left:566.6px;top:1136.45px;width:7.5px;height:7.5px;border:1px solid #a0a0a0;background:linear-gradient(#c2c2c2,#b2b2b2);background:#d6d6d6;border-color:#c8c8c8;"></div>
<div class="t" style="left:577.1px;top:1134.98px;height:12.04px;line-height:12.04px;font-size:8.6px;font-weight:normal;color:#333;">f4</div>
<div style="left:418.2px;top:1149.15px;width:7.5px;height:7.5px;border:1px solid #a0a0a0;background:linear-gradient(#c2c2c2,#b2b2b2);background:#d6d6d6;border-color:#c8c8c8;"></div>
<div class="t" style="left:428.7px;top:1147.68px;height:12.04px;line-height:12.04px;font-size:8.6px;font-weight:normal;color:#333;">f5</div>
<div style="left:455.7px;top:1149.15px;width:7.5px;height:7.5px;border:1px solid #a0a0a0;background:linear-gradient(#c2c2c2,#b2b2b2);background:#d6d6d6;border-color:#c8c8c8;"></div>
<div class="t" style="left:466.2px;top:1147.68px;height:12.04px;line-height:12.04px;font-size:8.6px;font-weight:normal;color:#333;">f6</div>
<div style="left:492.4px;top:1149.15px;width:7.5px;height:7.5px;border:1px solid #a0a0a0;background:linear-gradient(#c2c2c2,#b2b2b2);background:#d6d6d6;border-color:#c8c8c8;"></div>
<div class="t" style="left:502.9px;top:1147.68px;height:12.04px;line-height:12.04px;font-size:8.6px;font-weight:normal;color:#333;">f7</div>
<div style="left:529.6px;top:1149.15px;width:7.5px;height:7.5px;border:1px solid #a0a0a0;background:linear-gradient(#c2c2c2,#b2b2b2);background:#d6d6d6;border-color:#c8c8c8;"></div>
<div class="t" style="left:540.1px;top:1147.68px;height:12.04px;line-height:12.04px;font-size:8.6px;font-weight:normal;color:#333;">f8</div>
<div style="left:566.6px;top:1149.15px;width:7.5px;height:7.5px;border:1px solid #a0a0a0;background:linear-gradient(#c2c2c2,#b2b2b2);background:#d6d6d6;border-color:#c8c8c8;"></div>
<div class="t" style="left:577.1px;top:1147.68px;height:12.04px;line-height:12.04px;font-size:8.6px;font-weight:normal;color:#333;">f9</div>
<div style="left:417.6px;top:1163px;width:154.9px;height:27px;border:1px solid #aaa;background:#cacaca;"></div>
<div style="left:428.3px;top:1163px;width:1.0px;height:27px;background:#aaa;"></div>
<div style="left:468.9px;top:1163px;width:1.0px;height:27px;background:#aaa;"></div>
<div style="left:503.1px;top:1163px;width:1.0px;height:27px;background:#aaa;"></div>
<div style="left:537.5px;top:1163px;width:1.0px;height:27px;background:#aaa;"></div>
<div class="t" style="left:148.4px;width:600px;text-align:center;top:1166.92px;height:11.76px;line-height:11.76px;font-size:8.4px;font-weight:normal;color:#999;">Type</div>
<div class="t" style="left:186px;width:600px;text-align:center;top:1166.92px;height:11.76px;line-height:11.76px;font-size:8.4px;font-weight:normal;color:#999;">Fc</div>
<div class="t" style="left:220.4px;width:600px;text-align:center;top:1166.92px;height:11.76px;line-height:11.76px;font-size:8.4px;font-weight:normal;color:#999;">Gain</div>
<div class="t" style="left:255px;width:600px;text-align:center;top:1166.92px;height:11.76px;line-height:11.76px;font-size:8.4px;font-weight:normal;color:#999;">Q</div>
</div>
<div style="left:668px;top:807px;width:13px;height:372px;background:#f0f0f0;"></div>
<div style="left:669px;top:1039px;width:11px;height:26.5px;background:#c4c4c4;"></div>
<svg style="position:absolute;left:669px;top:811px;" width="11" height="8" viewBox="0 0 11 8"><path d="M2 6 L5.5 2.5 L9 6" fill="none" stroke="#333" stroke-width="1.2"/></svg>
<svg style="position:absolute;left:669px;top:1168px;" width="11" height="8" viewBox="0 0 11 8"><path d="M2 2 L5.5 5.5 L9 2" fill="none" stroke="#333" stroke-width="1.2"/></svg>
<div style="left:60px;top:1179px;width:621px;height:13px;background:#f0f0f0;"></div>
<div style="left:73px;top:1180px;width:554px;height:11px;background:#d6d6d6;"></div>
<svg style="position:absolute;left:62px;top:1181px;" width="9" height="9" viewBox="0 0 9 9"><path d="M6 1.5 L2.5 4.5 L6 7.5" fill="none" stroke="#333" stroke-width="1.2"/></svg>
<svg style="position:absolute;left:657px;top:1181px;" width="9" height="9" viewBox="0 0 9 9"><path d="M3 1.5 L6.5 4.5 L3 7.5" fill="none" stroke="#333" stroke-width="1.2"/></svg>
<div class="t" style="left:51.2px;top:1202.64px;height:10.92px;line-height:10.92px;font-size:7.8px;font-weight:bold;color:#151515;">CPU</div>
<div style="left:68.8px;top:1199px;width:131.2px;height:16px;background:#ececec;border:1px solid #d8d8d8;"></div>
<div style="left:68.8px;top:1199px;width:20.0px;height:16px;background:linear-gradient(#2fe02f,#10d010 55%,#0cb50c);"></div>
<div class="t" style="left:96px;top:1202.43px;height:11.34px;line-height:11.34px;font-size:8.1px;font-weight:bold;color:#151515;font-style:italic;color:#111;">50 MCPS / 320 MCPS</div>
<div class="t" style="left:218px;top:1202.64px;height:10.92px;line-height:10.92px;font-size:7.8px;font-weight:bold;color:#151515;">Memory</div>
<div style="left:252.8px;top:1199px;width:60.0px;height:18px;background:#22dc22;"></div>
<div class="t" style="left:255.5px;top:1203.48px;height:10.64px;line-height:10.64px;font-size:7.6px;font-weight:bold;color:#151515;font-style:italic;color:#0b3a0b;">129 KB / 320 KB</div>
<div style="left:425px;top:1196.5px;width:44.5px;height:20.3px;background:#c8c8c8;border:1px solid #c2c2c2;"></div>
<svg style="position:absolute;left:428px;top:1200.15px;" width="13" height="13" viewBox="0 0 13 13"><path d="M7 1.2 A5.6 5.6 0 1 0 11.5 10.2 A4.6 4.6 0 0 1 7 1.2 Z" fill="#151515"/><circle cx="9.5" cy="4.5" r="0.6" fill="#333"/><circle cx="11" cy="7" r="0.6" fill="#333"/></svg>
<div class="t" style="left:443.3px;top:1202.93px;height:10.64px;line-height:10.64px;font-size:7.6px;font-weight:bold;color:#1a1a1a;">Sleep</div>
<div style="left:469.5px;top:1196.5px;width:46.5px;height:20.3px;background:#c8c8c8;border:1px solid #c2c2c2;"></div>
<svg style="position:absolute;left:476.5px;top:1200.15px;" width="13" height="13" viewBox="0 0 13 13"><path d="M10.3 4.2 A4.3 4.3 0 1 0 10.6 8.6" fill="none" stroke="#151515" stroke-width="1.7"/><path d="M8 1.8 L11.8 2 L11 5.8 Z" fill="#151515"/></svg>
<div class="t" style="left:491.8px;top:1202.93px;height:10.64px;line-height:10.64px;font-size:7.6px;font-weight:bold;color:#1a1a1a;">Reset</div>
<div style="left:516px;top:1196.5px;width:58.5px;height:20.3px;background:#c8c8c8;border:1px solid #c2c2c2;"></div>
<svg style="position:absolute;left:525px;top:1200.15px;" width="13" height="13" viewBox="0 0 13 13"><path d="M2.5 5.5 A4 4 0 0 1 9 3 M10.5 7.5 A4 4 0 0 1 4 10" fill="none" stroke="#222" stroke-width="1.6"/><path d="M7.5 0.8 L11 3.2 L7.2 5 Z M5.5 12.2 L2 9.8 L5.8 8 Z" fill="#222"/></svg>
<div class="t" style="left:539.4px;top:1202.93px;height:10.64px;line-height:10.64px;font-size:7.6px;font-weight:bold;color:#1a1a1a;">Refresh</div>
<div style="left:574.5px;top:1196.5px;width:71.0px;height:20.3px;background:#c8c8c8;border:1px solid #c2c2c2;"></div>
<svg style="position:absolute;left:580.5px;top:1200.15px;" width="13" height="13" viewBox="0 0 13 13"><path d="M1.2 11 L6.3 5.9 A3.4 3.4 0 0 1 10.6 1.5 L8.6 3.5 L9.8 4.7 L11.8 2.7 A3.4 3.4 0 0 1 7.4 7 L2.3 12.1 Z" fill="#151515"/></svg>
<div class="t" style="left:595.4px;top:1203.42px;height:9.66px;line-height:9.66px;font-size:6.9px;font-weight:bold;color:#1a1a1a;">Factory Reset</div>
<div style="left:645.5px;top:1196.5px;width:43.5px;height:20.3px;background:#c8c8c8;border:1px solid #c2c2c2;"></div>
<svg style="position:absolute;left:651.5px;top:1200.15px;" width="13" height="13" viewBox="0 0 13 13"><path d="M1.5 7.5 L6.8 2.2 H11 V6.4 L5.7 11.7 Z" fill="none" stroke="#151515" stroke-width="1.5"/><path d="M3.5 7.5 L7 4 M5 9 L8.5 5.5" stroke="#151515" stroke-width="0.9"/><circle cx="9.2" cy="4" r="0.8" fill="#151515"/></svg>
<div class="t" style="left:665.4px;top:1202.93px;height:10.64px;line-height:10.64px;font-size:7.6px;font-weight:bold;color:#1a1a1a;">Tag...</div>
<div class="t" style="left:46px;top:1220.5px;height:12.6px;line-height:12.6px;font-size:9px;font-weight:bold;color:#111;">&#968;</div>
<div class="t" style="left:55.5px;top:1221.23px;height:11.13px;line-height:11.13px;font-size:7.95px;font-weight:normal;color:#222;">USB[0] :CJL BRU5 USB AUDIO CONNECTED -- [BPxx Audio Play SDK,&nbsp; Version: V0.1.12,&nbsp; Effect Lib: V1.35.1]</div></div></body></html>
